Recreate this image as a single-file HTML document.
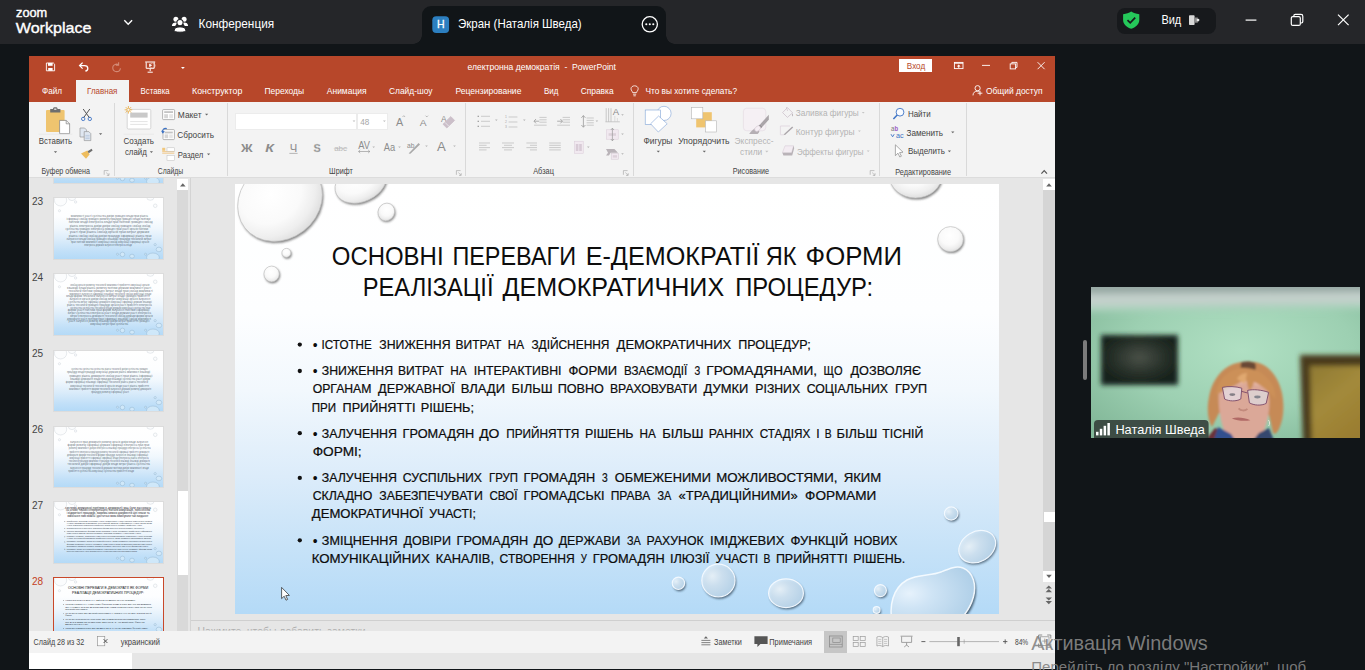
<!DOCTYPE html>
<html lang="uk">
<head>
<meta charset="utf-8">
<title>Zoom Workplace</title>
<style>
*{box-sizing:border-box;margin:0;padding:0}
html,body{width:1365px;height:670px;overflow:hidden}
body{background:#111518;font-family:"Liberation Sans","DejaVu Sans",sans-serif;position:relative;color:#fff}
svg.layer{position:absolute;left:0;top:0;width:1365px;height:670px;overflow:hidden;pointer-events:none}
svg text{font-family:"Liberation Sans","DejaVu Sans",sans-serif}
/* zoom top bar */
#top{position:absolute;left:0;top:0;width:1365px;height:44px;background:#252629}
#tab{position:absolute;left:422px;top:6px;width:244px;height:38px;background:#111518;border-radius:9px 9px 0 0}
#tab:before,#tab:after{content:"";position:absolute;bottom:0;width:9px;height:9px}
#tab:before{left:-9px;background:radial-gradient(circle at 0 0,#252629 8.5px,#111518 9px)}
#tab:after{right:-9px;background:radial-gradient(circle at 100% 0,#252629 8.5px,#111518 9px)}
#pill{position:absolute;left:1117px;top:8px;width:99px;height:26px;border-radius:8px;background:#17191c}
/* powerpoint */
#ppt{position:absolute;left:29px;top:56px;width:1026px;height:613px;background:#e6e6e6;overflow:hidden;color:#444}
#ptitle{position:absolute;left:0;top:0;width:1026px;height:46px;background:#b7472a}
#hometab{position:absolute;left:47px;top:24px;width:53px;height:22px;background:#f3f3f3}
#signin{position:absolute;left:870px;top:3px;width:33px;height:13px;background:#fff}
#ribbon{position:absolute;left:0;top:45.5px;width:1026px;height:76px;background:#f3f3f3;border-bottom:1px solid #dcdcdc}
.gl{position:absolute;top:1.6px;width:1px;height:73px;background:#d9d9d9}
#fontbox{position:absolute;left:206px;top:11.5px;width:122px;height:17px;background:#fff;border:1px solid #ececec}
#sizebox{position:absolute;left:328px;top:11.5px;width:31px;height:17px;background:#fff;border:1px solid #ececec}
#status{position:absolute;left:0;top:574.5px;width:1026px;height:22.5px;background:#f3f3f3}
#viewsel{position:absolute;left:795px;top:0;width:23px;height:22.5px;background:#c6c6c6}
#under{position:absolute;left:0;top:597px;width:1026px;height:15.5px;background:#e6e6e6}
#under i{position:absolute;left:0;top:0;width:103px;height:15.5px;background:#fff}
</style>
</head>
<body>
<!-- ZOOM TOP BAR -->
<div id="top"><div id="tab"></div><div id="pill"></div></div>
<svg class="layer" id="topsvg" viewBox="0 0 1365 670">
<text x="16" y="16.9" font-size="12.2" fill="#fff" textLength="31.2" lengthAdjust="spacingAndGlyphs" stroke="#fff" stroke-width="0.4">zoom</text>
<text x="15.8" y="32.7" font-size="15" fill="#fff" textLength="75.6" lengthAdjust="spacingAndGlyphs" stroke="#fff" stroke-width="0.35">Workplace</text>
<path d="M124.3 20.3 L128.2 24.3 L132.1 20.3" fill="none" stroke="#fff" stroke-width="1.4"/>
<g fill="#fff">
<circle cx="175.9" cy="19.3" r="2.5"/><circle cx="184.1" cy="19.3" r="2.5"/>
<path d="M171.9 26.1 C171.9 23.6 173.6 22.6 175.9 22.6 C177 22.6 177.6 22.9 178 23.1 C176.3 24 175.6 25 175.3 26.1 Z"/>
<path d="M188.1 26.1 C188.1 23.6 186.4 22.6 184.1 22.6 C183 22.6 182.4 22.9 182 23.1 C183.7 24 184.4 25 184.7 26.1 Z"/>
<circle cx="180" cy="22.6" r="3.1" stroke="#252629" stroke-width="1.1"/>
<path d="M174.2 30.5 C174.2 27.8 176.8 26.9 180 26.9 C183.2 26.9 185.8 27.8 185.8 30.5 C185.8 31.7 183.6 32.2 180 32.2 C176.4 32.2 174.2 31.7 174.2 30.5 Z" stroke="#252629" stroke-width="1"/>
</g>
<text x="198.6" y="28" font-size="13" fill="#fff" textLength="75.5" lengthAdjust="spacingAndGlyphs">Конференция</text>
<rect x="432.3" y="16.2" width="16.8" height="16.8" rx="4" fill="#2c7fc0"/>
<text x="440.7" y="28.3" font-size="10.5" fill="#fff" text-anchor="middle" stroke="#fff" stroke-width="0.3">Н</text>
<text x="458" y="28" font-size="13" fill="#fff" textLength="123.6" lengthAdjust="spacingAndGlyphs">Экран (Наталія Шведа)</text>
<circle cx="649.8" cy="24.3" r="7.6" fill="none" stroke="#fff" stroke-width="1.3"/>
<g fill="#fff"><circle cx="646.3" cy="24.3" r="1.05"/><circle cx="649.8" cy="24.3" r="1.05"/><circle cx="653.3" cy="24.3" r="1.05"/></g>
<path d="M1131.2 11.6 C1133.5 13.2 1136 14 1139.3 14.2 L1139.3 20 C1139.3 24.5 1135.5 27.3 1131.2 28.8 C1126.9 27.3 1123.1 24.5 1123.1 20 L1123.1 14.2 C1126.4 14 1128.9 13.2 1131.2 11.6 Z" fill="#25c85a"/>
<path d="M1127.5 20.2 L1130.2 22.9 L1135.2 17.6" fill="none" stroke="#17191c" stroke-width="1.7"/>
<text x="1161.4" y="24.4" font-size="13" fill="#fff" textLength="19.8" lengthAdjust="spacingAndGlyphs">Вид</text>
<rect x="1189" y="15.2" width="5.6" height="9.8" rx="0.8" fill="#d9d9d9"/><rect x="1194.6" y="17.5" width="3.2" height="5.2" fill="#8c8c8c"/><circle cx="1198" cy="20.1" r="1.4" fill="#e8e8e8"/>
<path d="M1245.6 20.1 H1256.4" stroke="#fff" stroke-width="1.2"/>
<rect x="1291.3" y="16.6" width="9" height="8.8" rx="1.5" fill="none" stroke="#fff" stroke-width="1.2"/>
<path d="M1293.8 16.4 V15.9 Q1293.8 14.4 1295.3 14.4 H1301 Q1302.8 14.4 1302.8 16.2 V21.6 Q1302.8 23 1301.4 23 H1300.6" fill="none" stroke="#fff" stroke-width="1.2"/>
<path d="M1338 14.6 L1348.6 25.2 M1348.6 14.6 L1338 25.2" stroke="#fff" stroke-width="1.2"/>
</svg>
<!-- POWERPOINT WINDOW -->
<div id="ppt">
  <div id="ptitle"><div id="hometab"></div><div id="signin"></div></div>
  <div id="ribbon">
    <div class="gl" style="left:85px"></div><div class="gl" style="left:198px"></div><div class="gl" style="left:436px"></div>
    <div class="gl" style="left:604px"></div><div class="gl" style="left:850px"></div><div class="gl" style="left:937px"></div>
    <div id="fontbox"></div><div id="sizebox"></div>
  </div>
  <div id="status"><div id="viewsel"></div></div>
  <div id="under"><i></i></div>
</div>
<svg class="layer" id="chromesvg" viewBox="0 0 1365 670">
<path d="M46.4 63 H53.4 L54.6 64.2 V70.8 H46.4 Z" fill="none" stroke="#fff" stroke-width="0.9"/><rect x="48" y="63" width="4.6" height="2.8" fill="#fff"/><rect x="48.2" y="68" width="4.4" height="2.8" fill="#fff"/>
<path d="M82.6 62.6 L79.6 65.6 L82.6 68.6 M79.8 65.6 H84.6 C86.6 65.6 87.8 66.9 87.8 68.4 C87.8 69.8 86.8 70.8 85.4 71" fill="none" stroke="#fff" stroke-width="1.3"/>
<path d="M118.6 62.3 V65.2 H115.8 M118.6 65 C117.6 64.2 116.6 64 115.8 64.2 C113.8 64.7 112.6 66.4 112.8 68.3 C113 70.2 114.6 71.6 116.6 71.6 C118.6 71.6 120.2 70.2 120.4 68.2" fill="none" stroke="#d38a76" stroke-width="1.1"/>
<path d="M145.2 62 H155.2 M146.2 62.3 V68.3 H154.2 V62.3 M150.2 68.5 V71.2 M147.6 72.2 H152.8" fill="none" stroke="#fff" stroke-width="1"/><path d="M149.2 63.6 L152.2 65.3 L149.2 67 Z" fill="#fff"/><circle cx="152.6" cy="65.6" r="2.6" fill="none" stroke="#f3d0c6" stroke-width="0.6"/>
<path d="M181 67 H184.8 L182.9 69 Z" fill="#fff"/><path d="M180.8 65.2 H185" stroke="#fff" stroke-width="0.0"/>
<text x="467.4" y="70.4" font-size="8.6" fill="#fff" textLength="148.6" lengthAdjust="spacingAndGlyphs">електронна демократія  -  PowerPoint</text>
<text x="906.8" y="68.9" font-size="8.6" fill="#b7472a" textLength="18.4" lengthAdjust="spacingAndGlyphs">Вход</text>
<rect x="954.4" y="62.4" width="8.6" height="6.2" fill="none" stroke="#fff" stroke-width="0.9"/><path d="M954.4 63.2 H963" stroke="#fff" stroke-width="1"/><path d="M958.7 64.6 L960.6 66.6 H959.3 V67.8 H958.1 V66.6 H956.8 Z" fill="#fff"/>
<path d="M982 65.4 H990" stroke="#fff" stroke-width="0.9"/>
<rect x="1010.2" y="63.9" width="5.4" height="5" fill="none" stroke="#fff" stroke-width="0.9"/><path d="M1011.8 63.7 V62.4 H1017 V67.4 H1015.8" fill="none" stroke="#fff" stroke-width="0.9"/>
<path d="M1037.6 62.2 L1044.6 69.2 M1044.6 62.2 L1037.6 69.2" stroke="#fff" stroke-width="0.9"/>
<text x="42" y="93.8" font-size="8.6" fill="#fff" textLength="20" lengthAdjust="spacingAndGlyphs">Файл</text>
<text x="140.5" y="93.8" font-size="8.6" fill="#fff" textLength="29.2" lengthAdjust="spacingAndGlyphs">Вставка</text>
<text x="192" y="93.8" font-size="8.6" fill="#fff" textLength="50.3" lengthAdjust="spacingAndGlyphs">Конструктор</text>
<text x="264.4" y="93.8" font-size="8.6" fill="#fff" textLength="39.7" lengthAdjust="spacingAndGlyphs">Переходы</text>
<text x="326.8" y="93.8" font-size="8.6" fill="#fff" textLength="39.8" lengthAdjust="spacingAndGlyphs">Анимация</text>
<text x="389" y="93.8" font-size="8.6" fill="#fff" textLength="43.5" lengthAdjust="spacingAndGlyphs">Слайд-шоу</text>
<text x="455.4" y="93.8" font-size="8.6" fill="#fff" textLength="66.0" lengthAdjust="spacingAndGlyphs">Рецензирование</text>
<text x="543.9" y="93.8" font-size="8.6" fill="#fff" textLength="14.4" lengthAdjust="spacingAndGlyphs">Вид</text>
<text x="580.7" y="93.8" font-size="8.6" fill="#fff" textLength="32.9" lengthAdjust="spacingAndGlyphs">Справка</text>
<text x="645.5" y="93.8" font-size="8.6" fill="#fff" textLength="91.5" lengthAdjust="spacingAndGlyphs">Что вы хотите сделать?</text>
<text x="87" y="93.8" font-size="8.6" fill="#b7472a" textLength="30.4" lengthAdjust="spacingAndGlyphs">Главная</text>
<path d="M632.6 92.6 C632.6 91.4 631 90.6 631 88.8 C631 87 632.6 85.8 634.6 85.8 C636.6 85.8 638.2 87 638.2 88.8 C638.2 90.6 636.6 91.4 636.6 92.6 Z M633 94.2 H636.2 M633.4 95.8 H635.8" fill="none" stroke="#fff" stroke-width="0.8"/>
<circle cx="977.6" cy="88.2" r="2.6" fill="none" stroke="#fff" stroke-width="0.9"/><path d="M973 95.4 C973 92.6 974.8 91.2 977.2 91.2 C978.2 91.2 979 91.4 979.6 91.8 M980 90.8 V95.4 M977.6 93.2 H982.4" fill="none" stroke="#fff" stroke-width="0.9"/>
<text x="986" y="93.8" font-size="8.6" fill="#fff" textLength="56.5" lengthAdjust="spacingAndGlyphs">Общий доступ</text>
</svg>
<svg class="layer" id="ribbonsvg" viewBox="0 0 1365 670">
<rect x="46" y="110" width="18.6" height="22" rx="1" fill="#efc46f"/><path d="M50.2 110.6 V109 H53 C53 107.6 53.8 107.2 55.3 107.2 C56.8 107.2 57.6 107.6 57.6 109 H60.4 V112.4 H50.2 Z" fill="#6e6e6e"/><rect x="54.2" y="108.6" width="2.2" height="1.2" fill="#f3f3f3"/>
<path d="M59.6 120.4 H66.2 L69.6 123.8 V133.6 H59.6 Z" fill="#fff" stroke="#7f7f7f" stroke-width="0.7"/><path d="M66.2 120.4 V123.8 H69.6" fill="none" stroke="#7f7f7f" stroke-width="0.7"/>
<path d="M38.6 134.2 H72.4" stroke="#e2e2e2" stroke-width="0.6"/>
<text x="38.8" y="144.1" font-size="8.6" fill="#444" textLength="33.4" lengthAdjust="spacingAndGlyphs">Вставить</text>
<path d="M53.9 151.3 h3.2 l-1.6 1.8 Z" fill="#666"/>
<path d="M83.2 109 L89.6 118 M89.8 109 L83.4 118" stroke="#555" stroke-width="1"/><circle cx="83.2" cy="118.9" r="1.7" fill="none" stroke="#3d73c5" stroke-width="0.9"/><circle cx="89.8" cy="118.9" r="1.7" fill="none" stroke="#3d73c5" stroke-width="0.9"/>
<path d="M80 128 H84.6 L86.6 130 V137 H80 Z" fill="#dfe7f1" stroke="#8a8a8a" stroke-width="0.6"/><path d="M84.2 131.6 H88.8 L90.8 133.6 V140.6 H84.2 Z" fill="#dfe7f1" stroke="#8a8a8a" stroke-width="0.6"/><path d="M85.4 135.4 H89.6 M85.4 137 H89.6 M85.4 138.6 H89.6" stroke="#9db3d0" stroke-width="0.5"/>
<path d="M99 133.2 h3.2 l-1.6 1.8 Z" fill="#666"/>
<path d="M81 153.6 L87.4 150.6 L89.6 154.6 L86 158.8 Z" fill="#eebd5e"/><path d="M87.6 151.2 L91.6 148.8 L92.6 150.4 L88.8 153.2 Z" fill="#6e6e6e"/>
<text x="41.5" y="174.3" font-size="8.6" fill="#444" textLength="48.5" lengthAdjust="spacingAndGlyphs">Буфер обмена</text>
<path d="M104.2 174.79999999999998 V170.6 H108.4 M106.2 172.6 L108.8 175.2 M109.0 173.2 V175.4 H106.8" fill="none" stroke="#a0a0a0" stroke-width="0.6"/>
<rect x="127.2" y="109.4" width="23.6" height="19.6" rx="1.2" fill="#fff" stroke="#c6c6c6" stroke-width="0.7"/><rect x="130.2" y="112.6" width="17.4" height="5" fill="#c9c9c9"/><path d="M130.2 121.6 H147.6 M130.2 124.4 H147.6" stroke="#d0d0d0" stroke-width="0.6"/>
<g stroke="#e8a93c" stroke-width="0.8"><path d="M128.4 106 V113.6 M124.6 109.8 H132.2 M125.7 107.1 L131.1 112.5 M131.1 107.1 L125.7 112.5"/></g><circle cx="128.4" cy="109.8" r="1.5" fill="#f3f3f3" stroke="#e8a93c" stroke-width="0.6"/>
<path d="M123.6 134.2 H154" stroke="#e2e2e2" stroke-width="0.6"/>
<text x="123.6" y="144.1" font-size="8.6" fill="#444" textLength="30.4" lengthAdjust="spacingAndGlyphs">Создать</text>
<text x="124.9" y="155.1" font-size="8.6" fill="#444" textLength="21.9" lengthAdjust="spacingAndGlyphs">слайд</text>
<path d="M149.8 151.3 h3.2 l-1.6 1.8 Z" fill="#666"/>
<rect x="162.6" y="109.6" width="12" height="10" rx="0.8" fill="#fff" stroke="#9a9a9a" stroke-width="0.7"/><rect x="164.2" y="111.2" width="8.8" height="1.8" fill="#c4c4c4"/><rect x="164.2" y="114.2" width="3.8" height="4" fill="#d6d6d6"/><rect x="169.2" y="114.2" width="3.8" height="4" fill="#e6e6e6"/>
<text x="177.8" y="118.2" font-size="8.6" fill="#444" textLength="23.8" lengthAdjust="spacingAndGlyphs">Макет</text>
<path d="M205 113.8 h3.2 l-1.6 1.8 Z" fill="#666"/>
<rect x="163" y="129.6" width="11.4" height="10" rx="0.8" fill="#fff" stroke="#9a9a9a" stroke-width="0.7"/><rect x="164.6" y="131.6" width="8.2" height="1.8" fill="#c4c4c4"/><rect x="164.6" y="134.4" width="3.6" height="3.8" fill="#d6d6d6"/><rect x="169.2" y="134.4" width="3.6" height="3.8" fill="#e6e6e6"/>
<path d="M162.6 132.6 C162 129.6 164 127.8 166.8 128.6" fill="none" stroke="#3d73c5" stroke-width="1.1"/><path d="M161 130.8 L162.8 133.8 L164.8 131.2 Z" fill="#3d73c5"/>
<text x="177.3" y="137.8" font-size="8.6" fill="#444" textLength="36.7" lengthAdjust="spacingAndGlyphs">Сбросить</text>
<rect x="162.2" y="147.8" width="3" height="3" fill="#f0c77e"/><path d="M162.2 151.6 H174.4 M162.2 153.2 H174.4" stroke="#efb860" stroke-width="0.7"/><rect x="167" y="147.8" width="7.4" height="3.4" fill="#fff" stroke="#bdbdbd" stroke-width="0.5"/><rect x="167" y="155.4" width="7.4" height="5" fill="#fff" stroke="#bdbdbd" stroke-width="0.5"/>
<text x="177.8" y="157.6" font-size="8.6" fill="#444" textLength="25.5" lengthAdjust="spacingAndGlyphs">Раздел</text>
<path d="M207 153.4 h3.2 l-1.6 1.8 Z" fill="#666"/>
<text x="157.8" y="174.3" font-size="8.6" fill="#444" textLength="25.4" lengthAdjust="spacingAndGlyphs">Слайды</text>
<path d="M352.6 120.4 h2.8 l-1.4 1.5999999999999999 Z" fill="#bdbdbd"/>
<text x="360.2" y="124.8" font-size="8.6" fill="#a6a6a6" textLength="9" lengthAdjust="spacingAndGlyphs">48</text>
<path d="M383 120.4 h2.8 l-1.4 1.5999999999999999 Z" fill="#bdbdbd"/>
<text x="396" y="125.7" font-size="10.5" fill="#8c8c8c" textLength="7.2" lengthAdjust="spacingAndGlyphs">A</text>
<path d="M402.6 116.9 L403.8 115.7 L405 116.9" fill="none" stroke="#8c8c8c" stroke-width="0.6"/>
<text x="419.8" y="125.7" font-size="9.4" fill="#8c8c8c" textLength="6.8" lengthAdjust="spacingAndGlyphs">A</text>
<path d="M425.6 115.7 L426.8 116.9 L428 115.7" fill="none" stroke="#8c8c8c" stroke-width="0.6"/>
<text x="441" y="121.5" font-size="9.8" fill="#8c8c8c" textLength="5.6" lengthAdjust="spacingAndGlyphs">A</text>
<path d="M450.8 116.6 L454.6 120.4 L446.8 128 L443 124.2 Z" fill="#cbbfc9" stroke="#cbbfc9" stroke-width="0.8" stroke-linejoin="round"/><path d="M445 122.4 L448.8 126.2" stroke="#f3f3f3" stroke-width="0.7"/>
<text x="240.9" y="151.6" font-size="11.6" fill="#8c8c8c" textLength="11.6" lengthAdjust="spacingAndGlyphs" font-weight="700">Ж</text>
<text x="265.3" y="151.6" font-size="11.6" fill="#8c8c8c" textLength="8.7" lengthAdjust="spacingAndGlyphs" font-weight="700" font-style="italic">К</text>
<text x="289.8" y="151.6" font-size="11.6" fill="#8c8c8c" textLength="7.5" lengthAdjust="spacingAndGlyphs">Ч</text>
<path d="M289.4 153.4 H297.6" stroke="#8c8c8c" stroke-width="0.6"/>
<text x="313.6" y="151.6" font-size="11.6" fill="#8c8c8c" textLength="7.2" lengthAdjust="spacingAndGlyphs" font-weight="700" stroke="#d2d2d2" stroke-width="0.3">S</text>
<text x="334.2" y="150.8" font-size="8" fill="#b8b8b8" textLength="12.8" lengthAdjust="spacingAndGlyphs">abc</text>
<path d="M333.8 148.4 H347.4" stroke="#b8b8b8" stroke-width="0.5"/>
<text x="358.3" y="149" font-size="10" fill="#8c8c8c" textLength="11.7" lengthAdjust="spacingAndGlyphs">AV</text>
<path d="M358.6 151.5 H369.8 M360.2 150 L358.6 151.5 L360.2 153 M368.2 150 L369.8 151.5 L368.2 153" fill="none" stroke="#8c8c8c" stroke-width="0.6"/>
<path d="M372.4 146.6 h2.6 l-1.3 1.5 Z" fill="#b5b5b5"/>
<text x="383.8" y="150.8" font-size="10.4" fill="#8c8c8c" textLength="11.4" lengthAdjust="spacingAndGlyphs">Aa</text>
<path d="M398.2 146.6 h2.6 l-1.3 1.5 Z" fill="#b5b5b5"/>
<text x="407" y="147.6" font-size="7.4" fill="#8c8c8c" textLength="7.4" lengthAdjust="spacingAndGlyphs">ab</text>
<path d="M408.6 153.4 L418.6 143 L420 144.4 L410.4 153.8 Z" fill="#a9a9a9"/>
<path d="M425.2 145.4 h2.6 l-1.3 1.5 Z" fill="#b5b5b5"/>
<text x="437" y="151.4" font-size="13.2" fill="#8c8c8c" textLength="8.8" lengthAdjust="spacingAndGlyphs">A</text>
<path d="M453.2 145.4 h2.6 l-1.3 1.5 Z" fill="#b5b5b5"/>
<text x="329.1" y="174.3" font-size="8.6" fill="#444" textLength="23.6" lengthAdjust="spacingAndGlyphs">Шрифт</text>
<path d="M456.4 174.79999999999998 V170.6 H460.59999999999997 M458.4 172.6 L461.0 175.2 M461.2 173.2 V175.4 H459.0" fill="none" stroke="#a0a0a0" stroke-width="0.6"/>
<path d="M481 116.3 H490" stroke="#b9b9b9" stroke-width="0.7"/><path d="M481 121.3 H490" stroke="#b9b9b9" stroke-width="0.7"/><path d="M481 126.3 H490" stroke="#b9b9b9" stroke-width="0.7"/>
<g fill="#9a9a9a"><rect x="477.6" y="115.7" width="1.3" height="1.3"/><rect x="477.6" y="120.7" width="1.3" height="1.3"/><rect x="477.6" y="125.7" width="1.3" height="1.3"/></g>
<path d="M495 119.4 h2.6 l-1.3 1.5 Z" fill="#b5b5b5"/>
<path d="M508.6 117 H517.4" stroke="#b9b9b9" stroke-width="0.7"/><path d="M508.6 122 H517.4" stroke="#b9b9b9" stroke-width="0.7"/><path d="M508.6 127 H517.4" stroke="#b9b9b9" stroke-width="0.7"/>
<text x="505" y="118" font-size="3.4" fill="#a8a8a8">1</text>
<text x="505" y="123" font-size="3.4" fill="#a8a8a8">2</text>
<text x="505" y="128" font-size="3.4" fill="#a8a8a8">3</text>
<path d="M523 119.4 h2.6 l-1.3 1.5 Z" fill="#b5b5b5"/>
<path d="M539.4 117.4 H546.6" stroke="#b9b9b9" stroke-width="0.7"/><path d="M539.4 119.8 H546.6" stroke="#b9b9b9" stroke-width="0.7"/><path d="M539.4 122.2 H546.6" stroke="#b9b9b9" stroke-width="0.7"/>
<path d="M534 125.2 H546.6" stroke="#b9b9b9" stroke-width="0.7"/>
<path d="M534 121.2 H539.2 M536 119 L534 121.2 L536 123.4" fill="none" stroke="#9a9a9a" stroke-width="0.8"/>
<path d="M562.6 117.4 H570" stroke="#b9b9b9" stroke-width="0.7"/><path d="M562.6 119.8 H570" stroke="#b9b9b9" stroke-width="0.7"/><path d="M562.6 122.2 H570" stroke="#b9b9b9" stroke-width="0.7"/>
<path d="M557.2 125.2 H570" stroke="#b9b9b9" stroke-width="0.7"/>
<path d="M557.2 121.2 H562.4 M560.4 119 L562.4 121.2 L560.4 123.4" fill="none" stroke="#9a9a9a" stroke-width="0.8"/>
<path d="M586.6 118 H593.8" stroke="#b9b9b9" stroke-width="0.7"/><path d="M586.6 120.4 H593.8" stroke="#b9b9b9" stroke-width="0.7"/><path d="M586.6 122.8 H593.8" stroke="#b9b9b9" stroke-width="0.7"/><path d="M586.6 125.2 H593.8" stroke="#b9b9b9" stroke-width="0.7"/>
<path d="M583.4 115.6 V127.2 M581.4 117.8 L583.4 115.6 L585.4 117.8 M581.4 125 L583.4 127.2 L585.4 125" fill="none" stroke="#9a9a9a" stroke-width="0.8"/>
<path d="M595.6 120.4 h2.6 l-1.3 1.5 Z" fill="#b5b5b5"/>
<path d="M606.2 108.2 V121.6 M608.6 108.2 V121.6 M611 108.2 V121.6 M605.4 121.8 H619.8" stroke="#ababab" stroke-width="0.6"/><path d="M614.8 116 V121.6 M617.4 118 V121.6" stroke="#c6c6c6" stroke-width="0.5"/>
<text x="612.8" y="115.2" font-size="9" fill="#8c8c8c" textLength="6.4" lengthAdjust="spacingAndGlyphs">A</text>
<path d="M621.2 114.2 h2.6 l-1.3 1.5 Z" fill="#b5b5b5"/>
<rect x="606.4" y="129.8" width="11.8" height="9.4" fill="#f1e9f0" stroke="#d9cbd7" stroke-width="0.5"/><rect x="608.6" y="133.2" width="7.4" height="2.6" fill="#dcd2da"/><path d="M612.4 128.2 V140.8 M610.8 130 L612.4 128.2 L614 130 M610.8 139 L612.4 140.8 L614 139" fill="none" stroke="#9a9a9a" stroke-width="0.7"/>
<path d="M621.2 133.4 h2.6 l-1.3 1.5 Z" fill="#b5b5b5"/>
<path d="M606 149 H614.4 L618 152.8 H610.6 L609 155.6 H606 L608 152.8 Z" fill="#b9b3b8"/><rect x="611.2" y="153.6" width="7.4" height="5.6" fill="#f1e9f0" stroke="#d3c7d1" stroke-width="0.5"/><rect x="612.8" y="155.2" width="4.2" height="2.4" fill="#dcd2da"/>
<path d="M621.2 153.2 h2.6 l-1.3 1.5 Z" fill="#b5b5b5"/>
<path d="M479 143 H490" stroke="#b9b9b9" stroke-width="0.7"/><path d="M479 147.6 H490" stroke="#b9b9b9" stroke-width="0.7"/>
<path d="M479 145.3 H486.6" stroke="#b9b9b9" stroke-width="0.7"/><path d="M479 149.9 H486.6" stroke="#b9b9b9" stroke-width="0.7"/>
<path d="M502 143 H514" stroke="#b9b9b9" stroke-width="0.7"/><path d="M502 147.6 H514" stroke="#b9b9b9" stroke-width="0.7"/>
<path d="M504 145.3 H512" stroke="#b9b9b9" stroke-width="0.7"/><path d="M504 149.9 H512" stroke="#b9b9b9" stroke-width="0.7"/>
<path d="M526.4 143 H537" stroke="#b9b9b9" stroke-width="0.7"/><path d="M526.4 147.6 H537" stroke="#b9b9b9" stroke-width="0.7"/>
<path d="M530 145.3 H537" stroke="#b9b9b9" stroke-width="0.7"/><path d="M530 149.9 H537" stroke="#b9b9b9" stroke-width="0.7"/>
<path d="M549.2 143 H560.8" stroke="#c4c4c4" stroke-width="0.9"/><path d="M549.2 145.3 H560.8" stroke="#c4c4c4" stroke-width="0.9"/><path d="M549.2 147.6 H560.8" stroke="#c4c4c4" stroke-width="0.9"/><path d="M549.2 149.9 H560.8" stroke="#c4c4c4" stroke-width="0.9"/>
<rect x="574.4" y="141.2" width="8.8" height="12.2" fill="#f1e9f0" stroke="#d9cbd7" stroke-width="0.5"/><rect x="575.8" y="144" width="2.6" height="7" fill="#d8cbd6"/><rect x="579.2" y="144" width="2.6" height="7" fill="#d8cbd6"/>
<path d="M587 146.4 h2.6 l-1.3 1.5 Z" fill="#b5b5b5"/>
<text x="533.2" y="174.3" font-size="8.6" fill="#444" textLength="20.7" lengthAdjust="spacingAndGlyphs">Абзац</text>
<path d="M623.4 174.79999999999998 V170.6 H627.6 M625.4 172.6 L628.0 175.2 M628.1999999999999 173.2 V175.4 H626.0" fill="none" stroke="#a0a0a0" stroke-width="0.6"/>
<circle cx="664" cy="113.4" r="7.1" fill="#fff" stroke="#7fa3d6" stroke-width="0.6"/><rect x="645.2" y="110" width="15.4" height="14.4" fill="#fff" stroke="#7fa3d6" stroke-width="0.6"/><path d="M658.6 116 L667.2 123.8 L658.3 132 L650.6 123.8 Z" fill="#fff" stroke="#7fa3d6" stroke-width="0.6"/>
<text x="643.5" y="143.9" font-size="8.6" fill="#444" textLength="28.9" lengthAdjust="spacingAndGlyphs">Фигуры</text>
<path d="M656.7 150.8 h3.2 l-1.6 1.8 Z" fill="#666"/>
<rect x="696.2" y="112.2" width="15.6" height="15.2" fill="#efc46f"/><rect x="691.4" y="107.4" width="11.4" height="11.4" fill="#fff" stroke="#b5b5b5" stroke-width="0.6"/><rect x="705.4" y="120.8" width="11.2" height="11.2" fill="#fff" stroke="#b5b5b5" stroke-width="0.6"/>
<text x="678.2" y="143.9" font-size="8.6" fill="#444" textLength="51.4" lengthAdjust="spacingAndGlyphs">Упорядочить</text>
<path d="M702.7 150.8 h3.2 l-1.6 1.8 Z" fill="#666"/>
<rect x="743.4" y="108.2" width="22.4" height="22.6" rx="3.4" fill="#f5f0f4" stroke="#e3d9e1" stroke-width="0.6"/><path d="M768.8 114.8 V119.8 L762.4 126.8 L760 124.4 Z" fill="#aaa5a9"/><path d="M762.4 126.8 L760 124.4 L758.4 126 L760.8 128.4 Z" fill="#8f8a8e"/><path d="M755 128.2 C752.6 129.6 750.8 131.6 749.2 133.9 H757.6 C758.6 133.2 759.2 132.2 759.4 131 Z" fill="#b5afb4"/><ellipse cx="757.6" cy="128.6" rx="3.3" ry="2.3" transform="rotate(-42 757.6 128.6)" fill="#f5eef4" stroke="#cfc3cd" stroke-width="0.5"/>
<text x="734.6" y="143.9" font-size="8.6" fill="#b3b3b3" textLength="39" lengthAdjust="spacingAndGlyphs">Экспресс-</text>
<text x="740" y="154.9" font-size="8.6" fill="#b3b3b3" textLength="22.3" lengthAdjust="spacingAndGlyphs">стили</text>
<path d="M765.2 150.8 h3.2 l-1.6 1.8 Z" fill="#c4c4c4"/>
<path d="M787.4 107.6 L792.6 112.8 L787.4 117.4 L782.6 112.6 Z" fill="#f3f3f3" stroke="#c9bcc7" stroke-width="0.7"/><path d="M786.4 107 L787.6 111" stroke="#c9bcc7" stroke-width="0.6"/><path d="M792.2 113.2 C793.2 114.6 793.4 115.6 792.6 116.4 C791.8 115.6 791.8 114.6 792.2 113.2 Z" fill="#b9b3b8"/>
<text x="795.7" y="116" font-size="8.6" fill="#b3b3b3" textLength="63.1" lengthAdjust="spacingAndGlyphs">Заливка фигуры</text>
<path d="M861.8 112 h2.8 l-1.4 1.5999999999999999 Z" fill="#c4c4c4"/>
<path d="M780.4 134.6 V126 H790" fill="none" stroke="#d9cbd7" stroke-width="0.6"/><path d="M783.6 134.6 L792.2 126.4 L793.2 127.4 L785 135 Z" fill="#aaa5a9"/><path d="M780.4 134.8 H784" stroke="#d9cbd7" stroke-width="0.6"/>
<text x="795.7" y="134.5" font-size="8.6" fill="#b3b3b3" textLength="58.9" lengthAdjust="spacingAndGlyphs">Контур фигуры</text>
<path d="M858 130.4 h2.8 l-1.4 1.5999999999999999 Z" fill="#c4c4c4"/>
<path d="M785 145.8 H793.6 L791.6 152.8 H782.4 Z" fill="#f3ecf2" stroke="#d3c7d1" stroke-width="0.5"/><path d="M782.4 152.8 H791.6 L793.6 145.8 L794.2 148.2 L792.2 155.4 H783.4 Z" fill="#b9b3b8"/>
<text x="797" y="154.5" font-size="8.6" fill="#b3b3b3" textLength="66.4" lengthAdjust="spacingAndGlyphs">Эффекты фигуры</text>
<path d="M866.8 150.4 h2.8 l-1.4 1.5999999999999999 Z" fill="#c4c4c4"/>
<text x="732.8" y="174.3" font-size="8.6" fill="#444" textLength="36.2" lengthAdjust="spacingAndGlyphs">Рисование</text>
<path d="M870.2 174.79999999999998 V170.6 H874.4000000000001 M872.2 172.6 L874.8000000000001 175.2 M875.0 173.2 V175.4 H872.8000000000001" fill="none" stroke="#a0a0a0" stroke-width="0.6"/>
<circle cx="900" cy="112.2" r="3.9" fill="#f8fbff" stroke="#3d73c5" stroke-width="0.9"/><path d="M897.2 115 L893.4 119" stroke="#3d73c5" stroke-width="1.5"/>
<text x="907.9" y="117" font-size="8.6" fill="#444" textLength="22.7" lengthAdjust="spacingAndGlyphs">Найти</text>
<text x="891" y="131.4" font-size="6.6" fill="#777" textLength="3.4" lengthAdjust="spacingAndGlyphs">a</text>
<text x="894.4" y="131.4" font-size="6.6" fill="#9b59c6" textLength="3.6" lengthAdjust="spacingAndGlyphs" font-weight="700">b</text>
<text x="896" y="137.8" font-size="6.6" fill="#3d73c5" textLength="7.6" lengthAdjust="spacingAndGlyphs">ac</text>
<path d="M891 134.2 L892.6 136.8 L894.2 134.2" fill="none" stroke="#3d73c5" stroke-width="0.9"/>
<text x="906.5" y="135.5" font-size="8.6" fill="#444" textLength="36.6" lengthAdjust="spacingAndGlyphs">Заменить</text>
<path d="M951.2 131.4 h3.2 l-1.6 1.8 Z" fill="#666"/>
<path d="M895.4 144.8 V155.6 L898 153.2 L899.8 157 L901.4 156.2 L899.6 152.6 L903 152.2 Z" fill="#fff" stroke="#777" stroke-width="0.6"/>
<text x="907.9" y="154" font-size="8.6" fill="#444" textLength="37" lengthAdjust="spacingAndGlyphs">Выделить</text>
<path d="M947.8 150.4 h3.2 l-1.6 1.8 Z" fill="#666"/>
<text x="895.3" y="174.5" font-size="8.6" fill="#444" textLength="55.7" lengthAdjust="spacingAndGlyphs">Редактирование</text>
<path d="M1041.4 173.7 L1044.2 170.7 L1047 173.7" fill="none" stroke="#555" stroke-width="1.2"/>
</svg>
<!-- THUMBNAIL PANE -->
<div id="thumbpane" style="position:absolute;left:29px;top:178px;width:162px;height:452.5px;overflow:hidden;background:#e6e6e6">
<div style="position:absolute;left:148px;top:1px;width:11.4px;height:452px;background:#d9d9d9"></div><div style="position:absolute;left:148px;top:1px;width:11.4px;height:11.4px;background:#fff"></div><div style="position:absolute;left:148.6px;top:313px;width:10.6px;height:84px;background:#fff"></div><div style="position:absolute;left:161px;top:0;width:1px;height:453px;background:#d4d4d4"></div>
<div style="position:absolute;left:25.4px;top:-55.6px;width:108.2px;height:60.8px;overflow:hidden;background:linear-gradient(180deg,#ffffff 0%,#fdfeff 30%,#f0f7fd 50%,#d9ebfa 70%,#c2e0f8 87%,#b4daf7 100%);outline:0.6px solid #dcdcdc;"><svg viewBox="0 0 108 61" width="108.2" height="60.8" style="position:absolute;left:0;top:0"><ellipse cx="6.3" cy="2.2" rx="6.2" ry="5.8" fill="#fbfcfd" stroke="#c4ccd3" stroke-width="0.4"/><ellipse cx="17.8" cy="-0.6" rx="3.8" ry="3.2" fill="#fbfcfd" stroke="#c4ccd3" stroke-width="0.4"/><ellipse cx="21.4" cy="4" rx="1.2" ry="1.2" fill="#fbfcfd" stroke="#c4ccd3" stroke-width="0.4"/><ellipse cx="5.2" cy="12.8" rx="1.1" ry="1.1" fill="#fbfcfd" stroke="#c4ccd3" stroke-width="0.4"/><ellipse cx="96.4" cy="-0.8" rx="3.7" ry="3.1" fill="#fbfcfd" stroke="#c4ccd3" stroke-width="0.4"/><ellipse cx="101.3" cy="7.8" rx="1.8" ry="1.8" fill="#fbfcfd" stroke="#c4ccd3" stroke-width="0.4"/><ellipse cx="101.2" cy="46.8" rx="1.1" ry="1.1" fill="#d9ecfa" fill-opacity="0.7" stroke="#8fb0cc" stroke-width="0.45"/><ellipse cx="105" cy="51.6" rx="2.8" ry="2.3" fill="#d9ecfa" fill-opacity="0.7" stroke="#8fb0cc" stroke-width="0.45"/><ellipse cx="63.4" cy="56.4" rx="1" ry="1" fill="#d9ecfa" fill-opacity="0.7" stroke="#8fb0cc" stroke-width="0.45"/><ellipse cx="68.4" cy="56.6" rx="2.3" ry="2.3" fill="#d9ecfa" fill-opacity="0.7" stroke="#8fb0cc" stroke-width="0.45"/><ellipse cx="78" cy="58.4" rx="2.4" ry="2" fill="#d9ecfa" fill-opacity="0.7" stroke="#8fb0cc" stroke-width="0.45"/><ellipse cx="91.6" cy="56.4" rx="1" ry="1" fill="#d9ecfa" fill-opacity="0.7" stroke="#8fb0cc" stroke-width="0.45"/><ellipse cx="99" cy="59.6" rx="6.4" ry="4.4" fill="#d9ecfa" fill-opacity="0.7" stroke="#8fb0cc" stroke-width="0.45"/></svg></div>
<svg style="position:absolute;left:0;top:0;overflow:visible" width="30" height="10"><text x="3" y="26.8" font-size="10.4" textLength="11.2" lengthAdjust="spacingAndGlyphs" fill="#444">23</text></svg><div style="position:absolute;left:25.4px;top:20.4px;width:108.2px;height:60.8px;overflow:hidden;background:linear-gradient(180deg,#ffffff 0%,#fdfeff 30%,#f0f7fd 50%,#d9ebfa 70%,#c2e0f8 87%,#b4daf7 100%);outline:0.6px solid #dcdcdc;"><svg viewBox="0 0 108 61" width="108.2" height="60.8" style="position:absolute;left:0;top:0"><ellipse cx="6.3" cy="2.2" rx="6.2" ry="5.8" fill="#fbfcfd" stroke="#c4ccd3" stroke-width="0.4"/><ellipse cx="17.8" cy="-0.6" rx="3.8" ry="3.2" fill="#fbfcfd" stroke="#c4ccd3" stroke-width="0.4"/><ellipse cx="21.4" cy="4" rx="1.2" ry="1.2" fill="#fbfcfd" stroke="#c4ccd3" stroke-width="0.4"/><ellipse cx="5.2" cy="12.8" rx="1.1" ry="1.1" fill="#fbfcfd" stroke="#c4ccd3" stroke-width="0.4"/><ellipse cx="96.4" cy="-0.8" rx="3.7" ry="3.1" fill="#fbfcfd" stroke="#c4ccd3" stroke-width="0.4"/><ellipse cx="101.3" cy="7.8" rx="1.8" ry="1.8" fill="#fbfcfd" stroke="#c4ccd3" stroke-width="0.4"/><ellipse cx="101.2" cy="46.8" rx="1.1" ry="1.1" fill="#d9ecfa" fill-opacity="0.7" stroke="#8fb0cc" stroke-width="0.45"/><ellipse cx="105" cy="51.6" rx="2.8" ry="2.3" fill="#d9ecfa" fill-opacity="0.7" stroke="#8fb0cc" stroke-width="0.45"/><ellipse cx="63.4" cy="56.4" rx="1" ry="1" fill="#d9ecfa" fill-opacity="0.7" stroke="#8fb0cc" stroke-width="0.45"/><ellipse cx="68.4" cy="56.6" rx="2.3" ry="2.3" fill="#d9ecfa" fill-opacity="0.7" stroke="#8fb0cc" stroke-width="0.45"/><ellipse cx="78" cy="58.4" rx="2.4" ry="2" fill="#d9ecfa" fill-opacity="0.7" stroke="#8fb0cc" stroke-width="0.45"/><ellipse cx="91.6" cy="56.4" rx="1" ry="1" fill="#d9ecfa" fill-opacity="0.7" stroke="#8fb0cc" stroke-width="0.45"/><ellipse cx="99" cy="59.6" rx="6.4" ry="4.4" fill="#d9ecfa" fill-opacity="0.7" stroke="#8fb0cc" stroke-width="0.45"/><text x="55.4" y="18.85" font-size="2.9" text-anchor="middle" textLength="77.5" lengthAdjust="spacingAndGlyphs" fill="#46515c" fill-opacity="0.85">можливості участі суспільства довіри громадян влади прав рішень</text><text x="54.3" y="22.16" font-size="2.9" text-anchor="middle" textLength="84.1" lengthAdjust="spacingAndGlyphs" fill="#46515c" fill-opacity="0.85">інформації свобод громадян розвитку процедур громадян влади політики</text><text x="56.5" y="25.47" font-size="2.9" text-anchor="middle" textLength="84.1" lengthAdjust="spacingAndGlyphs" fill="#46515c" fill-opacity="0.85">політики влади електронна влади прав політики громадян свобод</text><text x="56.0" y="28.78" font-size="2.9" text-anchor="middle" textLength="80.8" lengthAdjust="spacingAndGlyphs" fill="#46515c" fill-opacity="0.85">рішень електронна довіри довіри свобод громадян свобод свобод</text><text x="52.7" y="32.09" font-size="2.9" text-anchor="middle" textLength="83.0" lengthAdjust="spacingAndGlyphs" fill="#46515c" fill-opacity="0.85">суспільства громадян електронна громадян прав участі органів політики</text><text x="55.4" y="35.40" font-size="2.9" text-anchor="middle" textLength="79.7" lengthAdjust="spacingAndGlyphs" fill="#46515c" fill-opacity="0.85">участі прав рішень свобод органів прав витрат держави</text><text x="56.0" y="38.71" font-size="2.9" text-anchor="middle" textLength="83.0" lengthAdjust="spacingAndGlyphs" fill="#46515c" fill-opacity="0.85">рішень свобод свобод довіри процедур інформації рішень прав</text><text x="54.9" y="42.02" font-size="2.9" text-anchor="middle" textLength="85.2" lengthAdjust="spacingAndGlyphs" fill="#46515c" fill-opacity="0.85">залучення влади свобод громадян взаємодії процедур технологій витрат</text><text x="56.0" y="45.33" font-size="2.9" text-anchor="middle" textLength="78.6" lengthAdjust="spacingAndGlyphs" fill="#46515c" fill-opacity="0.85">прав політики можливості комунікації свобод комунікації інформації органів</text><text x="54.0" y="48.64" font-size="2.9" text-anchor="middle" textLength="48.0" lengthAdjust="spacingAndGlyphs" fill="#46515c" fill-opacity="0.85">електронна держави залучення електронна влади</text></svg></div>
<svg style="position:absolute;left:0;top:0;overflow:visible" width="30" height="10"><text x="3" y="102.8" font-size="10.4" textLength="11.2" lengthAdjust="spacingAndGlyphs" fill="#444">24</text></svg><div style="position:absolute;left:25.4px;top:96.4px;width:108.2px;height:60.8px;overflow:hidden;background:linear-gradient(180deg,#ffffff 0%,#fdfeff 30%,#f0f7fd 50%,#d9ebfa 70%,#c2e0f8 87%,#b4daf7 100%);outline:0.6px solid #dcdcdc;"><svg viewBox="0 0 108 61" width="108.2" height="60.8" style="position:absolute;left:0;top:0"><ellipse cx="6.3" cy="2.2" rx="6.2" ry="5.8" fill="#fbfcfd" stroke="#c4ccd3" stroke-width="0.4"/><ellipse cx="17.8" cy="-0.6" rx="3.8" ry="3.2" fill="#fbfcfd" stroke="#c4ccd3" stroke-width="0.4"/><ellipse cx="21.4" cy="4" rx="1.2" ry="1.2" fill="#fbfcfd" stroke="#c4ccd3" stroke-width="0.4"/><ellipse cx="5.2" cy="12.8" rx="1.1" ry="1.1" fill="#fbfcfd" stroke="#c4ccd3" stroke-width="0.4"/><ellipse cx="96.4" cy="-0.8" rx="3.7" ry="3.1" fill="#fbfcfd" stroke="#c4ccd3" stroke-width="0.4"/><ellipse cx="101.3" cy="7.8" rx="1.8" ry="1.8" fill="#fbfcfd" stroke="#c4ccd3" stroke-width="0.4"/><ellipse cx="101.2" cy="46.8" rx="1.1" ry="1.1" fill="#d9ecfa" fill-opacity="0.7" stroke="#8fb0cc" stroke-width="0.45"/><ellipse cx="105" cy="51.6" rx="2.8" ry="2.3" fill="#d9ecfa" fill-opacity="0.7" stroke="#8fb0cc" stroke-width="0.45"/><ellipse cx="63.4" cy="56.4" rx="1" ry="1" fill="#d9ecfa" fill-opacity="0.7" stroke="#8fb0cc" stroke-width="0.45"/><ellipse cx="68.4" cy="56.6" rx="2.3" ry="2.3" fill="#d9ecfa" fill-opacity="0.7" stroke="#8fb0cc" stroke-width="0.45"/><ellipse cx="78" cy="58.4" rx="2.4" ry="2" fill="#d9ecfa" fill-opacity="0.7" stroke="#8fb0cc" stroke-width="0.45"/><ellipse cx="91.6" cy="56.4" rx="1" ry="1" fill="#d9ecfa" fill-opacity="0.7" stroke="#8fb0cc" stroke-width="0.45"/><ellipse cx="99" cy="59.6" rx="6.4" ry="4.4" fill="#d9ecfa" fill-opacity="0.7" stroke="#8fb0cc" stroke-width="0.45"/><text x="55.8" y="12.45" font-size="2.9" text-anchor="middle" textLength="79.6" lengthAdjust="spacingAndGlyphs" fill="#46515c" fill-opacity="0.85">свобод органів розвитку технологій можливості прийняття комунікації органів</text><text x="55.0" y="15.23" font-size="2.9" text-anchor="middle" textLength="84.4" lengthAdjust="spacingAndGlyphs" fill="#46515c" fill-opacity="0.85">взаємодії влади рішень розвитку політики держави можливості участі</text><text x="56.6" y="18.01" font-size="2.9" text-anchor="middle" textLength="84.4" lengthAdjust="spacingAndGlyphs" fill="#46515c" fill-opacity="0.85">технологій політики громадян витрат влади прав свобод можливості</text><text x="56.2" y="20.79" font-size="2.9" text-anchor="middle" textLength="82.0" lengthAdjust="spacingAndGlyphs" fill="#46515c" fill-opacity="0.85">можливості залучення інформації взаємодії технологій свобод комунікації влади</text><text x="53.8" y="23.57" font-size="2.9" text-anchor="middle" textLength="83.6" lengthAdjust="spacingAndGlyphs" fill="#46515c" fill-opacity="0.85">влади форми технологій залучення витрат влади громадян прийняття</text><text x="55.8" y="26.35" font-size="2.9" text-anchor="middle" textLength="81.2" lengthAdjust="spacingAndGlyphs" fill="#46515c" fill-opacity="0.85">залучення органів довіри свобод витрат комунікації органів залучення</text><text x="56.2" y="29.13" font-size="2.9" text-anchor="middle" textLength="83.6" lengthAdjust="spacingAndGlyphs" fill="#46515c" fill-opacity="0.85">суспільства витрат інформації демократія комунікації інформації держави взаємодії</text><text x="55.4" y="31.91" font-size="2.9" text-anchor="middle" textLength="85.2" lengthAdjust="spacingAndGlyphs" fill="#46515c" fill-opacity="0.85">рішень технологій громадян процедур органів участі прийняття електронна</text><text x="56.2" y="34.69" font-size="2.9" text-anchor="middle" textLength="80.4" lengthAdjust="spacingAndGlyphs" fill="#46515c" fill-opacity="0.85">суспільства суспільства технологій влади держави комунікації суспільства прав</text><text x="54.6" y="37.47" font-size="2.9" text-anchor="middle" textLength="82.0" lengthAdjust="spacingAndGlyphs" fill="#46515c" fill-opacity="0.85">форми участі політики прав форми залучення політики інформації</text><text x="55.4" y="40.25" font-size="2.9" text-anchor="middle" textLength="83.6" lengthAdjust="spacingAndGlyphs" fill="#46515c" fill-opacity="0.85">витрат суспільства електронна участі влади держави участі електронна</text><text x="57.4" y="43.03" font-size="2.9" text-anchor="middle" textLength="82.8" lengthAdjust="spacingAndGlyphs" fill="#46515c" fill-opacity="0.85">витрат електронна демократія технологій свобод держави форми органів</text><text x="55.0" y="45.81" font-size="2.9" text-anchor="middle" textLength="84.4" lengthAdjust="spacingAndGlyphs" fill="#46515c" fill-opacity="0.85">демократія участі політики прав інформації взаємодії свобод можливості</text><text x="55.0" y="48.59" font-size="2.9" text-anchor="middle" textLength="81.2" lengthAdjust="spacingAndGlyphs" fill="#46515c" fill-opacity="0.85">участі залучення розвитку взаємодії довіри витрат прийняття громадян</text><text x="55.0" y="51.37" font-size="2.9" text-anchor="middle" textLength="38.0" lengthAdjust="spacingAndGlyphs" fill="#46515c" fill-opacity="0.85">комунікації витрат прав суспільства</text></svg></div>
<svg style="position:absolute;left:0;top:0;overflow:visible" width="30" height="10"><text x="3" y="178.9" font-size="10.4" textLength="11.2" lengthAdjust="spacingAndGlyphs" fill="#444">25</text></svg><div style="position:absolute;left:25.4px;top:172.5px;width:108.2px;height:60.8px;overflow:hidden;background:linear-gradient(180deg,#ffffff 0%,#fdfeff 30%,#f0f7fd 50%,#d9ebfa 70%,#c2e0f8 87%,#b4daf7 100%);outline:0.6px solid #dcdcdc;"><svg viewBox="0 0 108 61" width="108.2" height="60.8" style="position:absolute;left:0;top:0"><ellipse cx="6.3" cy="2.2" rx="6.2" ry="5.8" fill="#fbfcfd" stroke="#c4ccd3" stroke-width="0.4"/><ellipse cx="17.8" cy="-0.6" rx="3.8" ry="3.2" fill="#fbfcfd" stroke="#c4ccd3" stroke-width="0.4"/><ellipse cx="21.4" cy="4" rx="1.2" ry="1.2" fill="#fbfcfd" stroke="#c4ccd3" stroke-width="0.4"/><ellipse cx="5.2" cy="12.8" rx="1.1" ry="1.1" fill="#fbfcfd" stroke="#c4ccd3" stroke-width="0.4"/><ellipse cx="96.4" cy="-0.8" rx="3.7" ry="3.1" fill="#fbfcfd" stroke="#c4ccd3" stroke-width="0.4"/><ellipse cx="101.3" cy="7.8" rx="1.8" ry="1.8" fill="#fbfcfd" stroke="#c4ccd3" stroke-width="0.4"/><ellipse cx="101.2" cy="46.8" rx="1.1" ry="1.1" fill="#d9ecfa" fill-opacity="0.7" stroke="#8fb0cc" stroke-width="0.45"/><ellipse cx="105" cy="51.6" rx="2.8" ry="2.3" fill="#d9ecfa" fill-opacity="0.7" stroke="#8fb0cc" stroke-width="0.45"/><ellipse cx="63.4" cy="56.4" rx="1" ry="1" fill="#d9ecfa" fill-opacity="0.7" stroke="#8fb0cc" stroke-width="0.45"/><ellipse cx="68.4" cy="56.6" rx="2.3" ry="2.3" fill="#d9ecfa" fill-opacity="0.7" stroke="#8fb0cc" stroke-width="0.45"/><ellipse cx="78" cy="58.4" rx="2.4" ry="2" fill="#d9ecfa" fill-opacity="0.7" stroke="#8fb0cc" stroke-width="0.45"/><ellipse cx="91.6" cy="56.4" rx="1" ry="1" fill="#d9ecfa" fill-opacity="0.7" stroke="#8fb0cc" stroke-width="0.45"/><ellipse cx="99" cy="59.6" rx="6.4" ry="4.4" fill="#d9ecfa" fill-opacity="0.7" stroke="#8fb0cc" stroke-width="0.45"/><text x="55.5" y="19.15" font-size="2.9" text-anchor="middle" textLength="76.9" lengthAdjust="spacingAndGlyphs" fill="#46515c" fill-opacity="0.85">суспільства суспільства суспільства рішень технологій довіри суспільства громадян</text><text x="54.5" y="22.46" font-size="2.9" text-anchor="middle" textLength="83.5" lengthAdjust="spacingAndGlyphs" fill="#46515c" fill-opacity="0.85">процедур влади процедур комунікації держави рішень можливості взаємодії</text><text x="56.7" y="25.77" font-size="2.9" text-anchor="middle" textLength="83.5" lengthAdjust="spacingAndGlyphs" fill="#46515c" fill-opacity="0.85">громадян рішень демократія свобод участі прав рішень інформації</text><text x="56.1" y="29.08" font-size="2.9" text-anchor="middle" textLength="80.2" lengthAdjust="spacingAndGlyphs" fill="#46515c" fill-opacity="0.85">взаємодії демократія влади процедур взаємодії суспільства участі довіри</text><text x="52.8" y="32.39" font-size="2.9" text-anchor="middle" textLength="82.4" lengthAdjust="spacingAndGlyphs" fill="#46515c" fill-opacity="0.85">форми інформації взаємодії інформації технологій рішень рішень технологій</text><text x="55.6" y="35.70" font-size="2.9" text-anchor="middle" textLength="79.1" lengthAdjust="spacingAndGlyphs" fill="#46515c" fill-opacity="0.85">комунікації технологій технологій органів влади участі рішень прийняття</text><text x="56.1" y="39.01" font-size="2.9" text-anchor="middle" textLength="82.4" lengthAdjust="spacingAndGlyphs" fill="#46515c" fill-opacity="0.85">можливості прийняття форми технологій залучення держави розвитку демократія</text><text x="56.0" y="42.32" font-size="2.9" text-anchor="middle" textLength="38.0" lengthAdjust="spacingAndGlyphs" fill="#46515c" fill-opacity="0.85">процедур розвитку інформації участі</text></svg></div>
<svg style="position:absolute;left:0;top:0;overflow:visible" width="30" height="10"><text x="3" y="254.9" font-size="10.4" textLength="11.2" lengthAdjust="spacingAndGlyphs" fill="#444">26</text></svg><div style="position:absolute;left:25.4px;top:248.5px;width:108.2px;height:60.8px;overflow:hidden;background:linear-gradient(180deg,#ffffff 0%,#fdfeff 30%,#f0f7fd 50%,#d9ebfa 70%,#c2e0f8 87%,#b4daf7 100%);outline:0.6px solid #dcdcdc;"><svg viewBox="0 0 108 61" width="108.2" height="60.8" style="position:absolute;left:0;top:0"><ellipse cx="6.3" cy="2.2" rx="6.2" ry="5.8" fill="#fbfcfd" stroke="#c4ccd3" stroke-width="0.4"/><ellipse cx="17.8" cy="-0.6" rx="3.8" ry="3.2" fill="#fbfcfd" stroke="#c4ccd3" stroke-width="0.4"/><ellipse cx="21.4" cy="4" rx="1.2" ry="1.2" fill="#fbfcfd" stroke="#c4ccd3" stroke-width="0.4"/><ellipse cx="5.2" cy="12.8" rx="1.1" ry="1.1" fill="#fbfcfd" stroke="#c4ccd3" stroke-width="0.4"/><ellipse cx="96.4" cy="-0.8" rx="3.7" ry="3.1" fill="#fbfcfd" stroke="#c4ccd3" stroke-width="0.4"/><ellipse cx="101.3" cy="7.8" rx="1.8" ry="1.8" fill="#fbfcfd" stroke="#c4ccd3" stroke-width="0.4"/><ellipse cx="101.2" cy="46.8" rx="1.1" ry="1.1" fill="#d9ecfa" fill-opacity="0.7" stroke="#8fb0cc" stroke-width="0.45"/><ellipse cx="105" cy="51.6" rx="2.8" ry="2.3" fill="#d9ecfa" fill-opacity="0.7" stroke="#8fb0cc" stroke-width="0.45"/><ellipse cx="63.4" cy="56.4" rx="1" ry="1" fill="#d9ecfa" fill-opacity="0.7" stroke="#8fb0cc" stroke-width="0.45"/><ellipse cx="68.4" cy="56.6" rx="2.3" ry="2.3" fill="#d9ecfa" fill-opacity="0.7" stroke="#8fb0cc" stroke-width="0.45"/><ellipse cx="78" cy="58.4" rx="2.4" ry="2" fill="#d9ecfa" fill-opacity="0.7" stroke="#8fb0cc" stroke-width="0.45"/><ellipse cx="91.6" cy="56.4" rx="1" ry="1" fill="#d9ecfa" fill-opacity="0.7" stroke="#8fb0cc" stroke-width="0.45"/><ellipse cx="99" cy="59.6" rx="6.4" ry="4.4" fill="#d9ecfa" fill-opacity="0.7" stroke="#8fb0cc" stroke-width="0.45"/><text x="55.0" y="16.15" font-size="2.9" text-anchor="middle" textLength="78.4" lengthAdjust="spacingAndGlyphs" fill="#46515c" fill-opacity="0.85">залучення прав демократія розвитку органів довіри влади залучення</text><text x="54.4" y="19.34" font-size="2.9" text-anchor="middle" textLength="82.0" lengthAdjust="spacingAndGlyphs" fill="#46515c" fill-opacity="0.85">форми розвитку інформації держави інформації електронна прав прав</text><text x="55.6" y="22.53" font-size="2.9" text-anchor="middle" textLength="82.0" lengthAdjust="spacingAndGlyphs" fill="#46515c" fill-opacity="0.85">розвитку можливості довіри електронна взаємодії процедур електронна суспільства</text><text x="55.3" y="25.72" font-size="2.9" text-anchor="middle" textLength="80.2" lengthAdjust="spacingAndGlyphs" fill="#46515c" fill-opacity="0.85">прийняття електронна процедур розвитку технологій інформації прийняття демократія</text><text x="53.5" y="28.91" font-size="2.9" text-anchor="middle" textLength="81.4" lengthAdjust="spacingAndGlyphs" fill="#46515c" fill-opacity="0.85">демократія форми технологій форми процедур залучення взаємодії інформації</text><text x="55.0" y="32.10" font-size="2.9" text-anchor="middle" textLength="79.6" lengthAdjust="spacingAndGlyphs" fill="#46515c" fill-opacity="0.85">комунікації прийняття інформації інформації влади електронна рішень електронна</text><text x="55.3" y="35.29" font-size="2.9" text-anchor="middle" textLength="81.4" lengthAdjust="spacingAndGlyphs" fill="#46515c" fill-opacity="0.85">технологій процедур можливості процедур технологій взаємодії взаємодії демократія</text><text x="54.7" y="38.48" font-size="2.9" text-anchor="middle" textLength="82.6" lengthAdjust="spacingAndGlyphs" fill="#46515c" fill-opacity="0.85">технологій довіри інформації довіри влади витрат рішень суспільства</text><text x="55.3" y="41.67" font-size="2.9" text-anchor="middle" textLength="79.0" lengthAdjust="spacingAndGlyphs" fill="#46515c" fill-opacity="0.85">залучення процедур технологій держави політики довіри можливості влади</text><text x="47.0" y="44.86" font-size="2.9" text-anchor="middle" textLength="66.0" lengthAdjust="spacingAndGlyphs" fill="#46515c" fill-opacity="0.85">прийняття суспільства комунікації суспільства прийняття влади</text></svg></div>
<svg style="position:absolute;left:0;top:0;overflow:visible" width="30" height="10"><text x="3" y="330.8" font-size="10.4" textLength="11.2" lengthAdjust="spacingAndGlyphs" fill="#444">27</text></svg><div style="position:absolute;left:25.4px;top:324.4px;width:108.2px;height:60.8px;overflow:hidden;background:linear-gradient(180deg,#ffffff 0%,#fdfeff 30%,#f0f7fd 50%,#d9ebfa 70%,#c2e0f8 87%,#b4daf7 100%);outline:0.6px solid #dcdcdc;"><svg viewBox="0 0 108 61" width="108.2" height="60.8" style="position:absolute;left:0;top:0"><ellipse cx="6.3" cy="2.2" rx="6.2" ry="5.8" fill="#fbfcfd" stroke="#c4ccd3" stroke-width="0.4"/><ellipse cx="17.8" cy="-0.6" rx="3.8" ry="3.2" fill="#fbfcfd" stroke="#c4ccd3" stroke-width="0.4"/><ellipse cx="21.4" cy="4" rx="1.2" ry="1.2" fill="#fbfcfd" stroke="#c4ccd3" stroke-width="0.4"/><ellipse cx="5.2" cy="12.8" rx="1.1" ry="1.1" fill="#fbfcfd" stroke="#c4ccd3" stroke-width="0.4"/><ellipse cx="96.4" cy="-0.8" rx="3.7" ry="3.1" fill="#fbfcfd" stroke="#c4ccd3" stroke-width="0.4"/><ellipse cx="101.3" cy="7.8" rx="1.8" ry="1.8" fill="#fbfcfd" stroke="#c4ccd3" stroke-width="0.4"/><ellipse cx="101.2" cy="46.8" rx="1.1" ry="1.1" fill="#d9ecfa" fill-opacity="0.7" stroke="#8fb0cc" stroke-width="0.45"/><ellipse cx="105" cy="51.6" rx="2.8" ry="2.3" fill="#d9ecfa" fill-opacity="0.7" stroke="#8fb0cc" stroke-width="0.45"/><ellipse cx="63.4" cy="56.4" rx="1" ry="1" fill="#d9ecfa" fill-opacity="0.7" stroke="#8fb0cc" stroke-width="0.45"/><ellipse cx="68.4" cy="56.6" rx="2.3" ry="2.3" fill="#d9ecfa" fill-opacity="0.7" stroke="#8fb0cc" stroke-width="0.45"/><ellipse cx="78" cy="58.4" rx="2.4" ry="2" fill="#d9ecfa" fill-opacity="0.7" stroke="#8fb0cc" stroke-width="0.45"/><ellipse cx="91.6" cy="56.4" rx="1" ry="1" fill="#d9ecfa" fill-opacity="0.7" stroke="#8fb0cc" stroke-width="0.45"/><ellipse cx="99" cy="59.6" rx="6.4" ry="4.4" fill="#d9ecfa" fill-opacity="0.7" stroke="#8fb0cc" stroke-width="0.45"/><text x="54" y="6.60" font-size="2.9" text-anchor="middle" textLength="86.0" lengthAdjust="spacingAndGlyphs" fill="#1c232b">система державної політики е-демократії має бути заснована</text><text x="54" y="9.45" font-size="2.9" text-anchor="middle" textLength="84.5" lengthAdjust="spacingAndGlyphs" fill="#1c232b">на чітких, точних інтерпретаціях, логічно комунікації, поясненням</text><text x="54" y="12.30" font-size="2.9" text-anchor="middle" textLength="83.0" lengthAdjust="spacingAndGlyphs" fill="#1c232b">і відкритості процедур, зокрема низкою документів цілі плани та</text><text x="54" y="15.15" font-size="2.9" text-anchor="middle" textLength="81.5" lengthAdjust="spacingAndGlyphs" fill="#1c232b">виконання яких можна і достатньо мова виконувати такі завдання:</text><text x="12.6" y="20.00" font-size="2.35" textLength="85.4" lengthAdjust="spacingAndGlyphs" fill="#3a4450">прийняття держави держави участі демократія участі свобод комунікації довіри</text><text x="12.6" y="22.05" font-size="2.35" textLength="85.4" lengthAdjust="spacingAndGlyphs" fill="#3a4450">участі взаємодії взаємодії технологій витрат інформації участі прав прав</text><text x="12.6" y="24.10" font-size="2.35" textLength="75.4" lengthAdjust="spacingAndGlyphs" fill="#3a4450">участі демократія демократія прийняття довіри рішень розвитку прийняття участі</text><circle cx="10.6" cy="19.50" r="0.4" fill="#333"/><text x="12.6" y="27.20" font-size="2.35" textLength="77.4" lengthAdjust="spacingAndGlyphs" fill="#3a4450">політики процедур процедур демократія форми процедур органів розвитку електронна</text><circle cx="10.6" cy="26.70" r="0.4" fill="#333"/><text x="12.6" y="30.30" font-size="2.35" textLength="85.4" lengthAdjust="spacingAndGlyphs" fill="#3a4450">свобод можливості форми прав політики участі громадян прийняття інформації</text><text x="12.6" y="32.35" font-size="2.35" textLength="74.4" lengthAdjust="spacingAndGlyphs" fill="#3a4450">комунікації витрат свобод розвитку політики розвитку участі прав участі</text><circle cx="10.6" cy="29.80" r="0.4" fill="#333"/><text x="12.6" y="35.45" font-size="2.35" textLength="85.4" lengthAdjust="spacingAndGlyphs" fill="#3a4450">розвитку розвитку демократія комунікації держави взаємодії демократія участі держави</text><text x="12.6" y="37.50" font-size="2.35" textLength="84.4" lengthAdjust="spacingAndGlyphs" fill="#3a4450">участі технологій взаємодії прийняття рішень прав громадян можливості витрат</text><circle cx="10.6" cy="34.95" r="0.4" fill="#333"/><text x="12.6" y="40.60" font-size="2.35" textLength="85.4" lengthAdjust="spacingAndGlyphs" fill="#3a4450">розвитку розвитку прав технологій рішень прав громадян електронна процедур</text><text x="12.6" y="42.65" font-size="2.35" textLength="85.4" lengthAdjust="spacingAndGlyphs" fill="#3a4450">форми громадян рішень розвитку комунікації прав демократія влади комунікації</text><text x="12.6" y="44.70" font-size="2.35" textLength="81.4" lengthAdjust="spacingAndGlyphs" fill="#3a4450">можливості взаємодії розвитку взаємодії розвитку процедур залучення форми комунікації</text><circle cx="10.6" cy="40.10" r="0.4" fill="#333"/><text x="12.6" y="47.80" font-size="2.35" textLength="85.4" lengthAdjust="spacingAndGlyphs" fill="#3a4450">розвитку прав технологій розвитку електронна залучення розвитку форми прав</text><text x="12.6" y="49.85" font-size="2.35" textLength="70.4" lengthAdjust="spacingAndGlyphs" fill="#3a4450">процедур комунікації участі політики рішень суспільства комунікації можливості влади</text><circle cx="10.6" cy="47.30" r="0.4" fill="#333"/></svg></div>
<svg style="position:absolute;left:0;top:0;overflow:visible" width="30" height="10"><text x="3" y="406.8" font-size="10.4" textLength="11.2" lengthAdjust="spacingAndGlyphs" fill="#c43e1c">28</text></svg><div style="position:absolute;left:25.4px;top:400.4px;width:108.2px;height:60.8px;overflow:hidden;background:linear-gradient(180deg,#ffffff 0%,#fdfeff 30%,#f0f7fd 50%,#d9ebfa 70%,#c2e0f8 87%,#b4daf7 100%);outline:1.6px solid #c9482a;outline-offset:0.6px;"><svg viewBox="0 0 108 61" width="108.2" height="60.8" style="position:absolute;left:0;top:0"><ellipse cx="6.3" cy="2.2" rx="6.2" ry="5.8" fill="#fbfcfd" stroke="#c4ccd3" stroke-width="0.4"/><ellipse cx="17.8" cy="-0.6" rx="3.8" ry="3.2" fill="#fbfcfd" stroke="#c4ccd3" stroke-width="0.4"/><ellipse cx="21.4" cy="4" rx="1.2" ry="1.2" fill="#fbfcfd" stroke="#c4ccd3" stroke-width="0.4"/><ellipse cx="5.2" cy="12.8" rx="1.1" ry="1.1" fill="#fbfcfd" stroke="#c4ccd3" stroke-width="0.4"/><ellipse cx="96.4" cy="-0.8" rx="3.7" ry="3.1" fill="#fbfcfd" stroke="#c4ccd3" stroke-width="0.4"/><ellipse cx="101.3" cy="7.8" rx="1.8" ry="1.8" fill="#fbfcfd" stroke="#c4ccd3" stroke-width="0.4"/><ellipse cx="101.2" cy="46.8" rx="1.1" ry="1.1" fill="#d9ecfa" fill-opacity="0.7" stroke="#8fb0cc" stroke-width="0.45"/><ellipse cx="105" cy="51.6" rx="2.8" ry="2.3" fill="#d9ecfa" fill-opacity="0.7" stroke="#8fb0cc" stroke-width="0.45"/><ellipse cx="63.4" cy="56.4" rx="1" ry="1" fill="#d9ecfa" fill-opacity="0.7" stroke="#8fb0cc" stroke-width="0.45"/><ellipse cx="68.4" cy="56.6" rx="2.3" ry="2.3" fill="#d9ecfa" fill-opacity="0.7" stroke="#8fb0cc" stroke-width="0.45"/><ellipse cx="78" cy="58.4" rx="2.4" ry="2" fill="#d9ecfa" fill-opacity="0.7" stroke="#8fb0cc" stroke-width="0.45"/><ellipse cx="91.6" cy="56.4" rx="1" ry="1" fill="#d9ecfa" fill-opacity="0.7" stroke="#8fb0cc" stroke-width="0.45"/><ellipse cx="99" cy="59.6" rx="6.4" ry="4.4" fill="#d9ecfa" fill-opacity="0.7" stroke="#8fb0cc" stroke-width="0.45"/><text x="54" y="11.3" font-size="3.55" text-anchor="middle" textLength="80.6" lengthAdjust="spacingAndGlyphs" fill="#111">ОСНОВНІ ПЕРЕВАГИ Е-ДЕМОКРАТІЇ ЯК ФОРМИ</text><text x="54" y="15.7" font-size="3.55" text-anchor="middle" textLength="72.2" lengthAdjust="spacingAndGlyphs" fill="#111">РЕАЛІЗАЦІЇ ДЕМОКРАТИЧНИХ ПРОЦЕДУР:</text><text x="10.93" y="23.39" font-size="2.2" textLength="70.5" lengthAdjust="spacingAndGlyphs" fill="#222a33">• ІСТОТНЕ ЗНИЖЕННЯ ВИТРАТ НА ЗДІЙСНЕННЯ ДЕМОКРАТИЧНИХ ПРОЦЕДУР;</text><text x="10.93" y="27.14" font-size="2.2" textLength="86.1" lengthAdjust="spacingAndGlyphs" fill="#222a33">• ЗНИЖЕННЯ ВИТРАТ НА ІНТЕРАКТИВНІ ФОРМИ ВЗАЄМОДІЇ З ГРОМАДЯНАМИ, ЩО ДОЗВОЛЯЄ</text><text x="10.93" y="29.71" font-size="2.2" textLength="86.9" lengthAdjust="spacingAndGlyphs" fill="#222a33">ОРГАНАМ ДЕРЖАВНОЇ ВЛАДИ БІЛЬШ ПОВНО ВРАХОВУВАТИ ДУМКИ РІЗНИХ СОЦІАЛЬНИХ ГРУП</text><text x="10.93" y="32.29" font-size="2.2" textLength="22.9" lengthAdjust="spacingAndGlyphs" fill="#222a33">ПРИ ПРИЙНЯТТІ РІШЕНЬ;</text><text x="10.93" y="35.96" font-size="2.2" textLength="86.6" lengthAdjust="spacingAndGlyphs" fill="#222a33">• ЗАЛУЧЕННЯ ГРОМАДЯН ДО ПРИЙНЯТТЯ РІШЕНЬ НА БІЛЬШ РАННІХ СТАДІЯХ І В БІЛЬШ ТІСНІЙ</text><text x="10.93" y="38.53" font-size="2.2" textLength="7.0" lengthAdjust="spacingAndGlyphs" fill="#222a33">ФОРМІ;</text><text x="10.93" y="42.30" font-size="2.2" textLength="80.3" lengthAdjust="spacingAndGlyphs" fill="#222a33">• ЗАЛУЧЕННЯ СУСПІЛЬНИХ ГРУП ГРОМАДЯН З ОБМЕЖЕНИМИ МОЖЛИВОСТЯМИ, ЯКИМ</text><text x="10.93" y="44.87" font-size="2.2" textLength="79.8" lengthAdjust="spacingAndGlyphs" fill="#222a33">СКЛАДНО ЗАБЕЗПЕЧУВАТИ СВОЇ ГРОМАДСЬКІ ПРАВА ЗА «ТРАДИЦІЙНИМИ» ФОРМАМИ</text><text x="10.93" y="47.44" font-size="2.2" textLength="23.1" lengthAdjust="spacingAndGlyphs" fill="#222a33">ДЕМОКРАТИЧНОЇ УЧАСТІ;</text><text x="10.93" y="51.15" font-size="2.2" textLength="82.9" lengthAdjust="spacingAndGlyphs" fill="#222a33">• ЗМІЦНЕННЯ ДОВІРИ ГРОМАДЯН ДО ДЕРЖАВИ ЗА РАХУНОК ІМІДЖЕВИХ ФУНКЦІЙ НОВИХ</text><text x="10.93" y="53.71" font-size="2.2" textLength="83.9" lengthAdjust="spacingAndGlyphs" fill="#222a33">КОМУНІКАЦІЙНИХ КАНАЛІВ, СТВОРЕННЯ У ГРОМАДЯН ІЛЮЗІЇ УЧАСТІ В ПРИЙНЯТТІ РІШЕНЬ.</text><circle cx="9.16" cy="22.78" r="0.35" fill="#222"/><circle cx="9.16" cy="26.53" r="0.35" fill="#222"/><circle cx="9.16" cy="35.35" r="0.35" fill="#222"/><circle cx="9.16" cy="41.69" r="0.35" fill="#222"/><circle cx="9.16" cy="50.54" r="0.35" fill="#222"/></svg></div>
</div>
<!-- MAIN SLIDE -->
<div id="slide" style="position:absolute;left:235px;top:184px;width:764px;height:430px;overflow:hidden;background:linear-gradient(180deg,#ffffff 0%,#fdfeff 30%,#f2f8fd 48%,#dcecfa 68%,#c6e2f8 85%,#b4daf7 100%)">
<svg viewBox="235 184 764 430" width="764" height="430" style="position:absolute;left:0;top:0">
<defs>
<filter id="dsh" x="-30%" y="-30%" width="160%" height="160%"><feGaussianBlur stdDeviation="0.9"/></filter>
<filter id="dsh2" x="-30%" y="-30%" width="160%" height="160%"><feGaussianBlur stdDeviation="1.6"/></filter>
<radialGradient id="dbody" cx="0.46" cy="0.36" r="0.66"><stop offset="0" stop-color="#ffffff"/><stop offset="0.55" stop-color="#fafafa"/><stop offset="0.8" stop-color="#eeeeee"/><stop offset="1" stop-color="#dcdcdc"/></radialGradient>
<radialGradient id="drim" cx="0.47" cy="0.45" r="0.56"><stop offset="0.86" stop-color="#8a8a8a" stop-opacity="0"/><stop offset="0.96" stop-color="#8a8a8a" stop-opacity="0.22"/><stop offset="1" stop-color="#777" stop-opacity="0.5"/></radialGradient>
<radialGradient id="bbody" cx="0.32" cy="0.36" r="0.85"><stop offset="0" stop-color="#ecf6fd" stop-opacity="0.95"/><stop offset="0.35" stop-color="#d6e9f8" stop-opacity="0.92"/><stop offset="1" stop-color="#b3d2ea" stop-opacity="0.95"/></radialGradient>
<radialGradient id="blobg" cx="0.22" cy="0.48" r="0.9"><stop offset="0" stop-color="#e6f2fc"/><stop offset="0.3" stop-color="#cfe4f5"/><stop offset="1" stop-color="#a9cbe5"/></radialGradient>
</defs>
<g><g transform="translate(1.17 1.69)"><ellipse transform="rotate(-38 280 200.5)" cx="280" cy="200.5" rx="44.5" ry="38.5" fill="#4f4f4f" opacity="0.72" filter="url(#dsh)"/></g><ellipse transform="rotate(-38 280 200.5)" cx="280" cy="200.5" rx="44.5" ry="38.5" fill="url(#dbody)" stroke="#c2c2c2" stroke-width="0.7"/></g>
<g><g transform="translate(1.08 1.56)"><ellipse transform="rotate(-25 360.8 182.6)" cx="360.8" cy="182.6" rx="27" ry="19" fill="#4f4f4f" opacity="0.72" filter="url(#dsh)"/></g><ellipse transform="rotate(-25 360.8 182.6)" cx="360.8" cy="182.6" rx="27" ry="19" fill="url(#dbody)" stroke="#c2c2c2" stroke-width="0.7"/></g>
<g><g transform="translate(0.90 1.30)"><ellipse transform="rotate(25 386.3 212)" cx="386.3" cy="212" rx="8.2" ry="9" fill="#4f4f4f" opacity="0.72" filter="url(#dsh)"/></g><ellipse transform="rotate(25 386.3 212)" cx="386.3" cy="212" rx="8.2" ry="9" fill="url(#dbody)" stroke="#c2c2c2" stroke-width="0.7"/></g>
<g><g transform="translate(0.90 1.30)"><ellipse cx="286.4" cy="252.9" rx="4.5" ry="4.5" fill="#4f4f4f" opacity="0.72" filter="url(#dsh)"/></g><ellipse cx="286.4" cy="252.9" rx="4.5" ry="4.5" fill="url(#dbody)" stroke="#c2c2c2" stroke-width="0.7"/></g>
<g><g transform="translate(0.90 1.30)"><ellipse cx="271.6" cy="274" rx="7.7" ry="7.9" fill="#4f4f4f" opacity="0.72" filter="url(#dsh)"/></g><ellipse cx="271.6" cy="274" rx="7.7" ry="7.9" fill="url(#dbody)" stroke="#c2c2c2" stroke-width="0.7"/></g>
<g><g transform="translate(1.08 1.56)"><ellipse cx="915.5" cy="176" rx="26" ry="22" fill="#4f4f4f" opacity="0.72" filter="url(#dsh)"/></g><ellipse cx="915.5" cy="176" rx="26" ry="22" fill="url(#dbody)" stroke="#c2c2c2" stroke-width="0.7"/></g>
<g><g transform="translate(0.90 1.30)"><ellipse cx="950.5" cy="239.2" rx="12.8" ry="12.6" fill="#4f4f4f" opacity="0.72" filter="url(#dsh)"/></g><ellipse cx="950.5" cy="239.2" rx="12.8" ry="12.6" fill="url(#dbody)" stroke="#c2c2c2" stroke-width="0.7"/></g>
<g id="bluedrops">
<g><g transform="translate(1.10 1.70)"><ellipse cx="951.2" cy="513.5" rx="6.8" ry="6.6" fill="#34495c" opacity="0.8" filter="url(#dsh)"/></g><ellipse cx="951.2" cy="513.5" rx="6.8" ry="6.6" fill="url(#bbody)" stroke="#f4faff" stroke-opacity="0.95" stroke-width="1.2"/></g>
<g><g transform="translate(1.10 1.70)"><ellipse transform="rotate(-30 977.2 546.7)" cx="977.2" cy="546.7" rx="19.4" ry="15" fill="#34495c" opacity="0.8" filter="url(#dsh)"/></g><ellipse transform="rotate(-30 977.2 546.7)" cx="977.2" cy="546.7" rx="19.4" ry="15" fill="url(#bbody)" stroke="#f4faff" stroke-opacity="0.95" stroke-width="1.2"/></g>
<g><g transform="translate(1.10 1.70)"><ellipse cx="678.4" cy="583.3" rx="6.2" ry="6.2" fill="#34495c" opacity="0.8" filter="url(#dsh)"/></g><ellipse cx="678.4" cy="583.3" rx="6.2" ry="6.2" fill="url(#bbody)" stroke="#f4faff" stroke-opacity="0.95" stroke-width="1.2"/></g>
<g><g transform="translate(1.10 1.70)"><ellipse cx="718.4" cy="580.6" rx="16.6" ry="16.4" fill="#34495c" opacity="0.8" filter="url(#dsh)"/></g><ellipse cx="718.4" cy="580.6" rx="16.6" ry="16.4" fill="url(#bbody)" stroke="#f4faff" stroke-opacity="0.95" stroke-width="1.2"/></g>
<g><g transform="translate(1.10 1.70)"><ellipse cx="786" cy="593.2" rx="17.4" ry="14.4" fill="#34495c" opacity="0.8" filter="url(#dsh)"/></g><ellipse cx="786" cy="593.2" rx="17.4" ry="14.4" fill="url(#bbody)" stroke="#f4faff" stroke-opacity="0.95" stroke-width="1.2"/></g>
<g><g transform="translate(1.10 1.70)"><ellipse cx="880.4" cy="590.6" rx="6" ry="6" fill="#34495c" opacity="0.8" filter="url(#dsh)"/></g><ellipse cx="880.4" cy="590.6" rx="6" ry="6" fill="url(#bbody)" stroke="#f4faff" stroke-opacity="0.95" stroke-width="1.2"/></g>
<g><g transform="translate(1.10 1.70)"><ellipse cx="876.6" cy="610" rx="3.4" ry="3.4" fill="#34495c" opacity="0.8" filter="url(#dsh)"/></g><ellipse cx="876.6" cy="610" rx="3.4" ry="3.4" fill="url(#bbody)" stroke="#f4faff" stroke-opacity="0.95" stroke-width="1.2"/></g>
<g><path d="M892.4 622 C888.6 606 893 588 907 580 C918 574 931 576 941 572 C949 568.6 956 565.4 963 568 C973.6 572.4 976.6 585 973.4 597 C971 606 966 614 958 622 Z" fill="#2f4456" opacity="0.85" filter="url(#dsh)" transform="translate(1.5 2.2)"/><path d="M892.4 622 C888.6 606 893 588 907 580 C918 574 931 576 941 572 C949 568.6 956 565.4 963 568 C973.6 572.4 976.6 585 973.4 597 C971 606 966 614 958 622 Z" fill="url(#blobg)" stroke="#f6fbff" stroke-opacity="0.95" stroke-width="1.5"/></g>
</g>
<text x="331.78" y="264.8" font-size="26" fill="#0d0d0d" textLength="111.77" lengthAdjust="spacingAndGlyphs">ОСНОВНІ</text>
<text x="452.4" y="264.8" font-size="26" fill="#0d0d0d" textLength="123.62" lengthAdjust="spacingAndGlyphs">ПЕРЕВАГИ</text>
<text x="585.66" y="264.8" font-size="26" fill="#0d0d0d" textLength="173.59" lengthAdjust="spacingAndGlyphs">Е-ДЕМОКРАТІЇ</text>
<text x="765.69" y="264.8" font-size="26" fill="#0d0d0d" textLength="30.74" lengthAdjust="spacingAndGlyphs">ЯК</text>
<text x="805.61" y="264.8" font-size="26" fill="#0d0d0d" textLength="96.36" lengthAdjust="spacingAndGlyphs">ФОРМИ</text>
<text x="362.78" y="295.7" font-size="26" fill="#0d0d0d" textLength="130.71" lengthAdjust="spacingAndGlyphs">РЕАЛІЗАЦІЇ</text>
<text x="502.6" y="295.7" font-size="26" fill="#0d0d0d" textLength="221.53" lengthAdjust="spacingAndGlyphs">ДЕМОКРАТИЧНИХ</text>
<text x="735.17" y="295.7" font-size="26" fill="#0d0d0d" textLength="137.86" lengthAdjust="spacingAndGlyphs">ПРОЦЕДУР:</text>
<circle cx="299.8" cy="344.6" r="2.15" fill="#111"/><circle cx="299.8" cy="371" r="2.15" fill="#111"/><circle cx="299.8" cy="433.2" r="2.15" fill="#111"/><circle cx="299.8" cy="477.9" r="2.15" fill="#111"/><circle cx="299.8" cy="540.3" r="2.15" fill="#111"/>
<text x="312.7" y="349.9" font-size="15" fill="#0c0c0c" textLength="4.83" lengthAdjust="spacingAndGlyphs">•</text>
<text x="321.58" y="348.9" font-size="12.7" fill="#0c0c0c" textLength="50.14" lengthAdjust="spacingAndGlyphs" stroke="#0c0c0c" stroke-width="0.22">ІСТОТНЕ</text>
<text x="379.3" y="348.9" font-size="12.7" fill="#0c0c0c" textLength="71.26" lengthAdjust="spacingAndGlyphs" stroke="#0c0c0c" stroke-width="0.22">ЗНИЖЕННЯ</text>
<text x="455.55" y="348.9" font-size="12.7" fill="#0c0c0c" textLength="45.71" lengthAdjust="spacingAndGlyphs" stroke="#0c0c0c" stroke-width="0.22">ВИТРАТ</text>
<text x="507.77" y="348.9" font-size="12.7" fill="#0c0c0c" textLength="16.33" lengthAdjust="spacingAndGlyphs" stroke="#0c0c0c" stroke-width="0.22">НА</text>
<text x="531.4" y="348.9" font-size="12.7" fill="#0c0c0c" textLength="78.05" lengthAdjust="spacingAndGlyphs" stroke="#0c0c0c" stroke-width="0.22">ЗДІЙСНЕННЯ</text>
<text x="616.6" y="348.9" font-size="12.7" fill="#0c0c0c" textLength="114.55" lengthAdjust="spacingAndGlyphs" stroke="#0c0c0c" stroke-width="0.22">ДЕМОКРАТИЧНИХ</text>
<text x="738.21" y="348.9" font-size="12.7" fill="#0c0c0c" textLength="72.61" lengthAdjust="spacingAndGlyphs" stroke="#0c0c0c" stroke-width="0.22">ПРОЦЕДУР;</text>
<text x="312.7" y="376.3" font-size="15" fill="#0c0c0c" textLength="4.83" lengthAdjust="spacingAndGlyphs">•</text>
<text x="321.8" y="375.3" font-size="12.7" fill="#0c0c0c" textLength="71.26" lengthAdjust="spacingAndGlyphs" stroke="#0c0c0c" stroke-width="0.22">ЗНИЖЕННЯ</text>
<text x="398.05" y="375.3" font-size="12.7" fill="#0c0c0c" textLength="45.71" lengthAdjust="spacingAndGlyphs" stroke="#0c0c0c" stroke-width="0.22">ВИТРАТ</text>
<text x="450.37" y="375.3" font-size="12.7" fill="#0c0c0c" textLength="16.33" lengthAdjust="spacingAndGlyphs" stroke="#0c0c0c" stroke-width="0.22">НА</text>
<text x="473.73" y="375.3" font-size="12.7" fill="#0c0c0c" textLength="87.78" lengthAdjust="spacingAndGlyphs" stroke="#0c0c0c" stroke-width="0.22">ІНТЕРАКТИВНІ</text>
<text x="568.5" y="375.3" font-size="12.7" fill="#0c0c0c" textLength="48.62" lengthAdjust="spacingAndGlyphs" stroke="#0c0c0c" stroke-width="0.22">ФОРМИ</text>
<text x="624.09" y="375.3" font-size="12.7" fill="#0c0c0c" textLength="63.18" lengthAdjust="spacingAndGlyphs" stroke="#0c0c0c" stroke-width="0.22">ВЗАЄМОДІЇ</text>
<text x="694.6" y="375.3" font-size="12.7" fill="#0c0c0c" textLength="5.75" lengthAdjust="spacingAndGlyphs" stroke="#0c0c0c" stroke-width="0.22">З</text>
<text x="706.32" y="375.3" font-size="12.7" fill="#0c0c0c" textLength="110.74" lengthAdjust="spacingAndGlyphs" stroke="#0c0c0c" stroke-width="0.22">ГРОМАДЯНАМИ,</text>
<text x="823.53" y="375.3" font-size="12.7" fill="#0c0c0c" textLength="18.96" lengthAdjust="spacingAndGlyphs" stroke="#0c0c0c" stroke-width="0.22">ЩО</text>
<text x="850.5" y="375.3" font-size="12.7" fill="#0c0c0c" textLength="70.52" lengthAdjust="spacingAndGlyphs" stroke="#0c0c0c" stroke-width="0.22">ДОЗВОЛЯЄ</text>
<text x="312.7" y="393.4" font-size="12.7" fill="#0c0c0c" textLength="58.75" lengthAdjust="spacingAndGlyphs" stroke="#0c0c0c" stroke-width="0.22">ОРГАНАМ</text>
<text x="378.1" y="393.4" font-size="12.7" fill="#0c0c0c" textLength="76.82" lengthAdjust="spacingAndGlyphs" stroke="#0c0c0c" stroke-width="0.22">ДЕРЖАВНОЇ</text>
<text x="460.67" y="393.4" font-size="12.7" fill="#0c0c0c" textLength="44.35" lengthAdjust="spacingAndGlyphs" stroke="#0c0c0c" stroke-width="0.22">ВЛАДИ</text>
<text x="511.58" y="393.4" font-size="12.7" fill="#0c0c0c" textLength="40.96" lengthAdjust="spacingAndGlyphs" stroke="#0c0c0c" stroke-width="0.22">БІЛЬШ</text>
<text x="557.7" y="393.4" font-size="12.7" fill="#0c0c0c" textLength="46.26" lengthAdjust="spacingAndGlyphs" stroke="#0c0c0c" stroke-width="0.22">ПОВНО</text>
<text x="609.94" y="393.4" font-size="12.7" fill="#0c0c0c" textLength="87.38" lengthAdjust="spacingAndGlyphs" stroke="#0c0c0c" stroke-width="0.22">ВРАХОВУВАТИ</text>
<text x="703.6" y="393.4" font-size="12.7" fill="#0c0c0c" textLength="44.82" lengthAdjust="spacingAndGlyphs" stroke="#0c0c0c" stroke-width="0.22">ДУМКИ</text>
<text x="755.34" y="393.4" font-size="12.7" fill="#0c0c0c" textLength="44.75" lengthAdjust="spacingAndGlyphs" stroke="#0c0c0c" stroke-width="0.22">РІЗНИХ</text>
<text x="806.7" y="393.4" font-size="12.7" fill="#0c0c0c" textLength="81.28" lengthAdjust="spacingAndGlyphs" stroke="#0c0c0c" stroke-width="0.22">СОЦІАЛЬНИХ</text>
<text x="895.0" y="393.4" font-size="12.7" fill="#0c0c0c" textLength="32.12" lengthAdjust="spacingAndGlyphs" stroke="#0c0c0c" stroke-width="0.22">ГРУП</text>
<text x="311.79" y="411.6" font-size="12.7" fill="#0c0c0c" textLength="24.42" lengthAdjust="spacingAndGlyphs" stroke="#0c0c0c" stroke-width="0.22">ПРИ</text>
<text x="342.6" y="411.6" font-size="12.7" fill="#0c0c0c" textLength="72.82" lengthAdjust="spacingAndGlyphs" stroke="#0c0c0c" stroke-width="0.22">ПРИЙНЯТТІ</text>
<text x="420.7" y="411.6" font-size="12.7" fill="#0c0c0c" textLength="53.33" lengthAdjust="spacingAndGlyphs" stroke="#0c0c0c" stroke-width="0.22">РІШЕНЬ;</text>
<text x="312.7" y="438.5" font-size="15" fill="#0c0c0c" textLength="4.83" lengthAdjust="spacingAndGlyphs">•</text>
<text x="321.8" y="437.5" font-size="12.7" fill="#0c0c0c" textLength="75.16" lengthAdjust="spacingAndGlyphs" stroke="#0c0c0c" stroke-width="0.22">ЗАЛУЧЕННЯ</text>
<text x="402.6" y="437.5" font-size="12.7" fill="#0c0c0c" textLength="71.57" lengthAdjust="spacingAndGlyphs" stroke="#0c0c0c" stroke-width="0.22">ГРОМАДЯН</text>
<text x="479.2" y="437.5" font-size="12.7" fill="#0c0c0c" textLength="20.26" lengthAdjust="spacingAndGlyphs" stroke="#0c0c0c" stroke-width="0.22">ДО</text>
<text x="506.17" y="437.5" font-size="12.7" fill="#0c0c0c" textLength="73.08" lengthAdjust="spacingAndGlyphs" stroke="#0c0c0c" stroke-width="0.22">ПРИЙНЯТТЯ</text>
<text x="585.02" y="437.5" font-size="12.7" fill="#0c0c0c" textLength="48.5" lengthAdjust="spacingAndGlyphs" stroke="#0c0c0c" stroke-width="0.22">РІШЕНЬ</text>
<text x="639.47" y="437.5" font-size="12.7" fill="#0c0c0c" textLength="16.33" lengthAdjust="spacingAndGlyphs" stroke="#0c0c0c" stroke-width="0.22">НА</text>
<text x="662.17" y="437.5" font-size="12.7" fill="#0c0c0c" textLength="41.38" lengthAdjust="spacingAndGlyphs" stroke="#0c0c0c" stroke-width="0.22">БІЛЬШ</text>
<text x="708.74" y="437.5" font-size="12.7" fill="#0c0c0c" textLength="44.75" lengthAdjust="spacingAndGlyphs" stroke="#0c0c0c" stroke-width="0.22">РАННІХ</text>
<text x="759.7" y="437.5" font-size="12.7" fill="#0c0c0c" textLength="50.6" lengthAdjust="spacingAndGlyphs" stroke="#0c0c0c" stroke-width="0.22">СТАДІЯХ</text>
<text x="816.15" y="437.5" font-size="12.7" fill="#0c0c0c" textLength="3.35" lengthAdjust="spacingAndGlyphs" stroke="#0c0c0c" stroke-width="0.22">І</text>
<text x="824.69" y="437.5" font-size="12.7" fill="#0c0c0c" textLength="6.89" lengthAdjust="spacingAndGlyphs" stroke="#0c0c0c" stroke-width="0.22">В</text>
<text x="836.59" y="437.5" font-size="12.7" fill="#0c0c0c" textLength="40.65" lengthAdjust="spacingAndGlyphs" stroke="#0c0c0c" stroke-width="0.22">БІЛЬШ</text>
<text x="882.3" y="437.5" font-size="12.7" fill="#0c0c0c" textLength="41.02" lengthAdjust="spacingAndGlyphs" stroke="#0c0c0c" stroke-width="0.22">ТІСНІЙ</text>
<text x="312.7" y="455.6" font-size="12.7" fill="#0c0c0c" textLength="48.97" lengthAdjust="spacingAndGlyphs" stroke="#0c0c0c" stroke-width="0.22">ФОРМІ;</text>
<text x="312.7" y="483.2" font-size="15" fill="#0c0c0c" textLength="4.83" lengthAdjust="spacingAndGlyphs">•</text>
<text x="321.8" y="482.2" font-size="12.7" fill="#0c0c0c" textLength="75.16" lengthAdjust="spacingAndGlyphs" stroke="#0c0c0c" stroke-width="0.22">ЗАЛУЧЕННЯ</text>
<text x="402.7" y="482.2" font-size="12.7" fill="#0c0c0c" textLength="79.38" lengthAdjust="spacingAndGlyphs" stroke="#0c0c0c" stroke-width="0.22">СУСПІЛЬНИХ</text>
<text x="489.0" y="482.2" font-size="12.7" fill="#0c0c0c" textLength="28.9" lengthAdjust="spacingAndGlyphs" stroke="#0c0c0c" stroke-width="0.22">ГРУП</text>
<text x="523.6" y="482.2" font-size="12.7" fill="#0c0c0c" textLength="71.57" lengthAdjust="spacingAndGlyphs" stroke="#0c0c0c" stroke-width="0.22">ГРОМАДЯН</text>
<text x="602.1" y="482.2" font-size="12.7" fill="#0c0c0c" textLength="5.75" lengthAdjust="spacingAndGlyphs" stroke="#0c0c0c" stroke-width="0.22">З</text>
<text x="614.8" y="482.2" font-size="12.7" fill="#0c0c0c" textLength="96.12" lengthAdjust="spacingAndGlyphs" stroke="#0c0c0c" stroke-width="0.22">ОБМЕЖЕНИМИ</text>
<text x="716.15" y="482.2" font-size="12.7" fill="#0c0c0c" textLength="121.3" lengthAdjust="spacingAndGlyphs" stroke="#0c0c0c" stroke-width="0.22">МОЖЛИВОСТЯМИ,</text>
<text x="843.7" y="482.2" font-size="12.7" fill="#0c0c0c" textLength="37.59" lengthAdjust="spacingAndGlyphs" stroke="#0c0c0c" stroke-width="0.22">ЯКИМ</text>
<text x="312.7" y="500.3" font-size="12.7" fill="#0c0c0c" textLength="59.67" lengthAdjust="spacingAndGlyphs" stroke="#0c0c0c" stroke-width="0.22">СКЛАДНО</text>
<text x="379.3" y="500.3" font-size="12.7" fill="#0c0c0c" textLength="103.42" lengthAdjust="spacingAndGlyphs" stroke="#0c0c0c" stroke-width="0.22">ЗАБЕЗПЕЧУВАТИ</text>
<text x="489.4" y="500.3" font-size="12.7" fill="#0c0c0c" textLength="27.97" lengthAdjust="spacingAndGlyphs" stroke="#0c0c0c" stroke-width="0.22">СВОЇ</text>
<text x="523.6" y="500.3" font-size="12.7" fill="#0c0c0c" textLength="81.02" lengthAdjust="spacingAndGlyphs" stroke="#0c0c0c" stroke-width="0.22">ГРОМАДСЬКІ</text>
<text x="610.65" y="500.3" font-size="12.7" fill="#0c0c0c" textLength="39.54" lengthAdjust="spacingAndGlyphs" stroke="#0c0c0c" stroke-width="0.22">ПРАВА</text>
<text x="657.5" y="500.3" font-size="12.7" fill="#0c0c0c" textLength="13.84" lengthAdjust="spacingAndGlyphs" stroke="#0c0c0c" stroke-width="0.22">ЗА</text>
<text x="678.6" y="500.3" font-size="12.7" fill="#0c0c0c" textLength="119.06" lengthAdjust="spacingAndGlyphs" stroke="#0c0c0c" stroke-width="0.22">«ТРАДИЦІЙНИМИ»</text>
<text x="805.1" y="500.3" font-size="12.7" fill="#0c0c0c" textLength="71.23" lengthAdjust="spacingAndGlyphs" stroke="#0c0c0c" stroke-width="0.22">ФОРМАМИ</text>
<text x="311.8" y="518.4" font-size="12.7" fill="#0c0c0c" textLength="111.31" lengthAdjust="spacingAndGlyphs" stroke="#0c0c0c" stroke-width="0.22">ДЕМОКРАТИЧНОЇ</text>
<text x="429.2" y="518.4" font-size="12.7" fill="#0c0c0c" textLength="46.61" lengthAdjust="spacingAndGlyphs" stroke="#0c0c0c" stroke-width="0.22">УЧАСТІ;</text>
<text x="312.7" y="545.6" font-size="15" fill="#0c0c0c" textLength="4.83" lengthAdjust="spacingAndGlyphs">•</text>
<text x="321.8" y="544.6" font-size="12.7" fill="#0c0c0c" textLength="75.76" lengthAdjust="spacingAndGlyphs" stroke="#0c0c0c" stroke-width="0.22">ЗМІЦНЕННЯ</text>
<text x="403.6" y="544.6" font-size="12.7" fill="#0c0c0c" textLength="47.32" lengthAdjust="spacingAndGlyphs" stroke="#0c0c0c" stroke-width="0.22">ДОВІРИ</text>
<text x="456.6" y="544.6" font-size="12.7" fill="#0c0c0c" textLength="71.57" lengthAdjust="spacingAndGlyphs" stroke="#0c0c0c" stroke-width="0.22">ГРОМАДЯН</text>
<text x="533.7" y="544.6" font-size="12.7" fill="#0c0c0c" textLength="19.66" lengthAdjust="spacingAndGlyphs" stroke="#0c0c0c" stroke-width="0.22">ДО</text>
<text x="558.7" y="544.6" font-size="12.7" fill="#0c0c0c" textLength="61.62" lengthAdjust="spacingAndGlyphs" stroke="#0c0c0c" stroke-width="0.22">ДЕРЖАВИ</text>
<text x="627.0" y="544.6" font-size="12.7" fill="#0c0c0c" textLength="13.84" lengthAdjust="spacingAndGlyphs" stroke="#0c0c0c" stroke-width="0.22">ЗА</text>
<text x="646.53" y="544.6" font-size="12.7" fill="#0c0c0c" textLength="57.18" lengthAdjust="spacingAndGlyphs" stroke="#0c0c0c" stroke-width="0.22">РАХУНОК</text>
<text x="710.07" y="544.6" font-size="12.7" fill="#0c0c0c" textLength="74.27" lengthAdjust="spacingAndGlyphs" stroke="#0c0c0c" stroke-width="0.22">ІМІДЖЕВИХ</text>
<text x="790.6" y="544.6" font-size="12.7" fill="#0c0c0c" textLength="57.52" lengthAdjust="spacingAndGlyphs" stroke="#0c0c0c" stroke-width="0.22">ФУНКЦІЙ</text>
<text x="853.83" y="544.6" font-size="12.7" fill="#0c0c0c" textLength="43.65" lengthAdjust="spacingAndGlyphs" stroke="#0c0c0c" stroke-width="0.22">НОВИХ</text>
<text x="311.65" y="562.6" font-size="12.7" fill="#0c0c0c" textLength="118.18" lengthAdjust="spacingAndGlyphs" stroke="#0c0c0c" stroke-width="0.22">КОМУНІКАЦІЙНИХ</text>
<text x="435.69" y="562.6" font-size="12.7" fill="#0c0c0c" textLength="58.34" lengthAdjust="spacingAndGlyphs" stroke="#0c0c0c" stroke-width="0.22">КАНАЛІВ,</text>
<text x="499.6" y="562.6" font-size="12.7" fill="#0c0c0c" textLength="75.15" lengthAdjust="spacingAndGlyphs" stroke="#0c0c0c" stroke-width="0.22">СТВОРЕННЯ</text>
<text x="580.7" y="562.6" font-size="12.7" fill="#0c0c0c" textLength="6.09" lengthAdjust="spacingAndGlyphs" stroke="#0c0c0c" stroke-width="0.22">У</text>
<text x="592.89" y="562.6" font-size="12.7" fill="#0c0c0c" textLength="71.77" lengthAdjust="spacingAndGlyphs" stroke="#0c0c0c" stroke-width="0.22">ГРОМАДЯН</text>
<text x="669.9" y="562.6" font-size="12.7" fill="#0c0c0c" textLength="39.53" lengthAdjust="spacingAndGlyphs" stroke="#0c0c0c" stroke-width="0.22">ІЛЮЗІЇ</text>
<text x="715.6" y="562.6" font-size="12.7" fill="#0c0c0c" textLength="42.5" lengthAdjust="spacingAndGlyphs" stroke="#0c0c0c" stroke-width="0.22">УЧАСТІ</text>
<text x="763.59" y="562.6" font-size="12.7" fill="#0c0c0c" textLength="6.89" lengthAdjust="spacingAndGlyphs" stroke="#0c0c0c" stroke-width="0.22">В</text>
<text x="775.92" y="562.6" font-size="12.7" fill="#0c0c0c" textLength="71.9" lengthAdjust="spacingAndGlyphs" stroke="#0c0c0c" stroke-width="0.22">ПРИЙНЯТТІ</text>
<text x="853.22" y="562.6" font-size="12.7" fill="#0c0c0c" textLength="52.1" lengthAdjust="spacingAndGlyphs" stroke="#0c0c0c" stroke-width="0.22">РІШЕНЬ.</text>
<path d="M281.6 587.4 V598.6 L284.2 596.2 L286 600.2 L287.6 599.4 L285.8 595.6 L289.4 595.4 Z" fill="#fff" stroke="#222" stroke-width="0.7"/>
</svg>
</div>
<!-- WORK AREA EXTRAS + STATUS BAR -->
<div id="vscroll" style="position:absolute;left:1043.4px;top:178px;width:11.6px;height:452px;background:#e6e6e6"><div style="position:absolute;left:0;top:12px;width:11.6px;height:381px;background:#d5d5d5"></div><div style="position:absolute;left:0;top:1.2px;width:11.6px;height:11.2px;background:#fff"></div><div style="position:absolute;left:0.4px;top:333.6px;width:10.8px;height:10.6px;background:#fff"></div><div style="position:absolute;left:0;top:393px;width:11.6px;height:11px;background:#fff"></div></div>
<div id="notes" style="position:absolute;left:191px;top:620px;width:864px;height:10.5px;overflow:hidden;border-top:1px solid #cfcfcf;background:#e6e6e6"></div>
<svg class="layer" id="statussvg" viewBox="0 0 1365 670">
<defs><clipPath id="notesclip"><rect x="191" y="622" width="852" height="8.5"/></clipPath></defs>
<g clip-path="url(#notesclip)"><text x="197.6" y="635.4" font-size="10.6" fill="#b0b0b0" textLength="168" lengthAdjust="spacingAndGlyphs">Нажмите, чтобы добавить заметки</text>
</g>
<path d="M180 186.4 L182.8 183.2 L185.6 186.4 Z" fill="#666"/>
<path d="M1046.2 186.4 L1049 183.2 L1051.8 186.4 Z" fill="#666"/>
<path d="M1046.2 574.8 L1049 578 L1051.8 574.8 Z" fill="#666"/>
<path d="M1045.6 588.6 L1048.8 585.4 L1052 588.6 Z M1045.6 592.2 L1048.8 589 L1052 592.2 Z" fill="#666"/>
<path d="M1045.6 597.4 L1048.8 600.6 L1052 597.4 Z M1045.6 601 L1048.8 604.2 L1052 601 Z" fill="#666"/>
<text x="33.6" y="644.8" font-size="8.6" fill="#444" textLength="50.6" lengthAdjust="spacingAndGlyphs">Слайд 28 из 32</text>
<rect x="97.4" y="636.4" width="7.4" height="9.4" fill="#fafafa" stroke="#8a8a8a" stroke-width="0.6"/><path d="M103.6 639.2 L107.4 643 M107.4 639.2 L103.6 643" stroke="#444" stroke-width="0.9"/>
<text x="120.8" y="644.8" font-size="8.6" fill="#444" textLength="39.2" lengthAdjust="spacingAndGlyphs">украинский</text>
<path d="M701.4 640.4 H710.4 M701.4 642.6 H710.4 M701.4 644.8 H710.4" stroke="#666" stroke-width="0.8"/><path d="M703.8 638.6 L705.9 636.2 L708 638.6 Z" fill="#666"/>
<text x="714" y="644.8" font-size="8.6" fill="#444" textLength="27.8" lengthAdjust="spacingAndGlyphs">Заметки</text>
<path d="M754.4 636.2 H767.6 V644 H760.4 L757.4 647 V644 H754.4 Z" fill="#555"/>
<text x="769.3" y="644.8" font-size="8.6" fill="#444" textLength="42.8" lengthAdjust="spacingAndGlyphs">Примечания</text>
<rect x="829.6" y="636" width="12.6" height="11" fill="none" stroke="#8c8c8c" stroke-width="0.8"/><rect x="832.8" y="638" width="7.4" height="4.6" fill="none" stroke="#8c8c8c" stroke-width="0.7"/><path d="M829.6 644.4 H842.2" stroke="#8c8c8c" stroke-width="0.7"/>
<g fill="none" stroke="#9a9a9a" stroke-width="0.7"><rect x="853.2" y="636.4" width="5" height="4"/><rect x="860.2" y="636.4" width="5" height="4"/><rect x="853.2" y="642.6" width="5" height="4"/><rect x="860.2" y="642.6" width="5" height="4"/></g>
<g fill="none" stroke="#9a9a9a" stroke-width="0.7"><path d="M882.7 637.6 C880.8 636.2 878.8 636.2 876.9 637 V646 C878.8 645.2 880.8 645.2 882.7 646.6 C884.6 645.2 886.6 645.2 888.5 646 V637 C886.6 636.2 884.6 636.2 882.7 637.6 Z M882.7 637.6 V646.6"/><path d="M878.2 639.4 H881.4 M878.2 641.4 H881.4 M878.2 643.4 H881.4 M884 639.4 H887.2 M884 641.4 H887.2 M884 643.4 H887.2" stroke-width="0.5"/></g>
<g fill="none" stroke="#8c8c8c" stroke-width="0.8"><path d="M900.6 636.2 H912.6 M901.6 636.6 V642.4 H911.6 V636.6 M906.6 642.6 V645.4 M904.2 647 L906.6 645 L909 647"/></g>
<path d="M921.4 641.6 H925.4" stroke="#555" stroke-width="0.9"/>
<path d="M929.4 641.6 H999" stroke="#9a9a9a" stroke-width="0.7"/><path d="M964.2 639.4 V643.8" stroke="#9a9a9a" stroke-width="0.6"/>
<rect x="957.2" y="637" width="2.6" height="9.2" fill="#666"/>
<path d="M1003 641.6 H1007.4 M1005.2 639.4 V643.8" stroke="#555" stroke-width="0.9"/>
<text x="1015" y="644.8" font-size="8.6" fill="#444" textLength="13.2" lengthAdjust="spacingAndGlyphs">84%</text>
<rect x="1040.4" y="636.8" width="8.6" height="8.6" fill="none" stroke="#8c8c8c" stroke-width="0.7"/><path d="M1038.6 638.6 V635 H1042.2 M1047.2 635 H1050.8 V638.6 M1050.8 643.6 V647.2 H1047.2 M1042.2 647.2 H1038.6 V643.6" fill="none" stroke="#777" stroke-width="0.8"/><path d="M1044.7 638.6 V643.6 M1042.2 641.1 H1047.2" stroke="#8c8c8c" stroke-width="0.7"/>
</svg>
<!-- VIDEO TILE -->
<div id="handle" style="position:absolute;left:1082.6px;top:340px;width:4.2px;height:40px;border-radius:2px;background:#7b7b7b"></div>
<div id="video" style="position:absolute;left:1091px;top:287px;width:269px;height:151px;overflow:hidden;background:#a3d4b6">
<svg viewBox="0 0 269 151" width="269" height="151" style="position:absolute;left:0;top:0">
<defs>
<filter id="vb1" x="-20%" y="-20%" width="140%" height="140%"><feGaussianBlur stdDeviation="2.6"/></filter>
<filter id="vb2" x="-20%" y="-20%" width="140%" height="140%"><feGaussianBlur stdDeviation="1.3"/></filter>
<filter id="vb3" x="-20%" y="-80%" width="140%" height="260%"><feGaussianBlur stdDeviation="3.2"/></filter>
<filter id="vb4" x="-20%" y="-20%" width="140%" height="140%"><feGaussianBlur stdDeviation="0.7"/></filter>
<radialGradient id="wall" cx="0.56" cy="0.42" r="0.75"><stop offset="0" stop-color="#b0e0c3"/><stop offset="0.55" stop-color="#9dd0b2"/><stop offset="1" stop-color="#82b798"/></radialGradient>
<linearGradient id="door" x1="0" y1="0" x2="0.6" y2="1"><stop offset="0" stop-color="#8f7a33"/><stop offset="0.5" stop-color="#a38a3b"/><stop offset="1" stop-color="#9a7d30"/></linearGradient>
<radialGradient id="pic" cx="0.5" cy="0.45" r="0.55"><stop offset="0" stop-color="#4a5148"/><stop offset="0.6" stop-color="#273029"/><stop offset="1" stop-color="#17221b"/></radialGradient>
</defs>
<rect width="269" height="151" fill="url(#wall)"/>
<g filter="url(#vb3)">
<rect x="-10" y="-8" width="290" height="15" fill="#98a9a4"/>
<path d="M-10 7 L280 5 L280 17 L-10 20 Z" fill="#c3d0cb"/>
<path d="M-10 19 L280 16 L280 22 L-10 25 Z" fill="#acd2bd"/>
</g>
<g filter="url(#vb1)">
<rect x="10" y="48" width="77" height="50" fill="url(#pic)"/>
<path d="M209 68 H276 V156 H212 Z" fill="#4a3a1a"/>
<path d="M219 79 H276 V156 H221 Z" fill="url(#door)"/>
</g>
<g filter="url(#vb2)">
<path d="M121 140 C116 132 116 120 118 110 C120 98 126 86 138 79 C146 74.6 158 73 168 76 C180 80 188 92 191 106 C193.4 118 193 132 188 142 C186 146 184 148 182 146 L178 128 L128 126 Z" fill="#c68a56"/>
<path d="M150 75.4 C154 74 160 74 164 76 C166 80 164 86 160 90 L152 90 C150 86 149 80 150 75.4 Z" fill="#6a4934"/>
<path d="M127.6 112 C127 98 136 88 152 88 C168 88 178 98 178.4 114 C178.6 130 174 146 166 156 H140 C132 146 128 130 127.6 112 Z" fill="#dba898"/>
<path d="M136 96 C140 91 148 89 154 90 C160 91 166 94 170 99 C164 97 156 96 150 97 C144 98 140 98 136 96 Z" fill="#e9bcae"/>
<path d="M125 108 C126 94 136 83 150 81 C162 80 174 85 181 97 C184 103 185 108 184 112 C178 104 170 98 163 95 C162 99 160 103 158 104 C157 100 156 96 155 93 C148 96 136 102 125 108 Z" fill="#cc9058"/>
<path d="M146 92 C148 88 152 86 156 86 L154 97 Z" fill="#e0a870"/>
<path d="M112 156 L124 141 L136 146 L142 156 Z" fill="#6b3038"/>
<path d="M122 156 L127 140 L140 147 L146 156 Z" fill="#33508e"/>
<path d="M160 156 L168 146 L178 141 L184 156 Z" fill="#34466e"/>
</g>
<g filter="url(#vb4)">
<path d="M131.4 100.4 C137 99 145 99.4 150.8 101.2 L149.8 112 C145.4 114.6 138 114.4 133.6 112 Z" fill="#e6e0ea" fill-opacity="0.72" stroke="#7a4868" stroke-width="0.9"/>
<path d="M156.6 103.4 C162 102 170.6 102.8 177.6 105.4 L175.2 116.4 C170.4 119 162.6 118.4 158.4 115.8 Z" fill="#dfe0e6" fill-opacity="0.68" stroke="#7a4868" stroke-width="0.9"/>
<path d="M150.8 104.4 L156.6 106" stroke="#7a4868" stroke-width="0.9"/>
<ellipse cx="141.3" cy="107.6" rx="3" ry="1.3" fill="#6d6a72" fill-opacity="0.8"/>
<ellipse cx="166.4" cy="110" rx="3.2" ry="1.4" fill="#6f7480" fill-opacity="0.8"/>
<path d="M147.6 121.4 C149.6 124 154 124.2 156.4 121.8" stroke="#c28a7c" stroke-width="1.8" fill="none"/>
<path d="M140.8 131.4 C146 129.8 153 130.4 159.4 133.2 C153 134.4 146 133.6 140.8 131.4 Z" fill="#b16a66"/>
<path d="M177.4 133 C179 134.6 179 137.4 177.6 139" stroke="#ece6de" stroke-width="0.9" fill="none"/>
</g>
<path d="M3 151 V137 Q3 133 7 133 H113.6 Q117.6 133 117.6 137 V151 Z" fill="#35403b" fill-opacity="0.9"/>
<g fill="#fff"><rect x="5" y="144.8" width="2.5" height="3.6"/><rect x="8.8" y="141.8" width="2.5" height="6.6"/><rect x="12.6" y="138.8" width="2.5" height="9.6"/><rect x="16.4" y="136" width="2.5" height="12.4"/></g>
<text x="24.4" y="147" font-size="12.6" fill="#fff" textLength="89.4" lengthAdjust="spacingAndGlyphs">Наталія Шведа</text>
</svg>
</div>
<svg class="layer" id="wmsvg" viewBox="0 0 1365 670">
<text x="1031.2" y="650.2" font-size="20.4" fill="#868686" textLength="176.6" lengthAdjust="spacingAndGlyphs" fill-opacity="0.92">Активація Windows</text>
<text x="1031.2" y="672.4" font-size="15.4" fill="#828282" textLength="275" lengthAdjust="spacingAndGlyphs" fill-opacity="0.92">Перейдіть до розділу "Настройки", щоб</text>
</svg>
</body>
</html>
